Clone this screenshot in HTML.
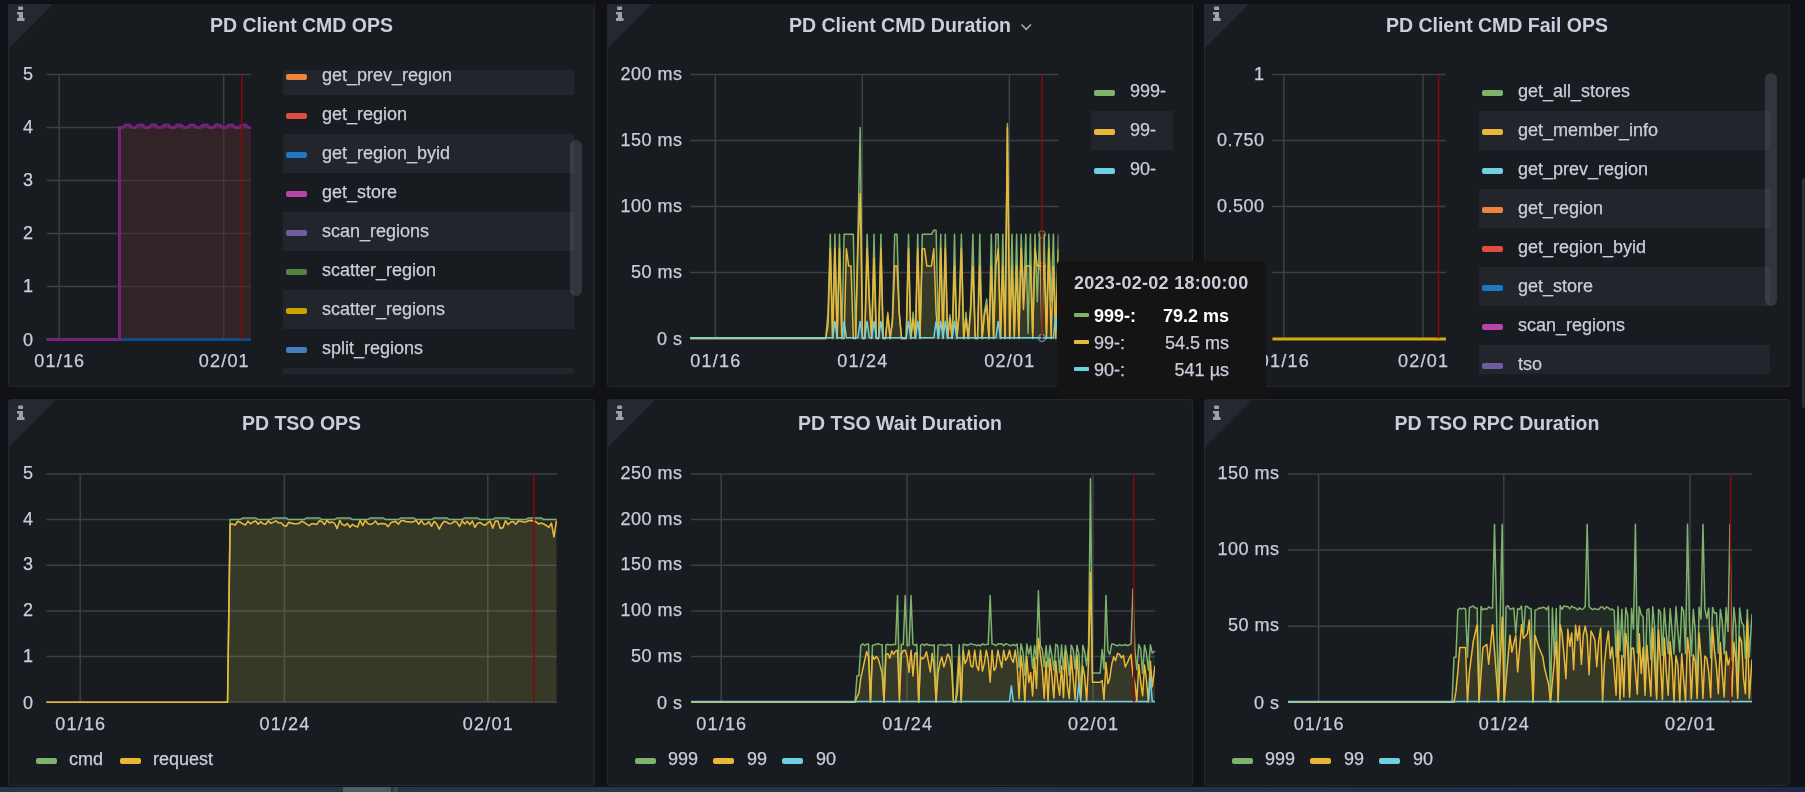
<!DOCTYPE html>
<html><head><meta charset="utf-8"><style>
html,body{margin:0;padding:0;width:1805px;height:792px;overflow:hidden;background:#111217;font-family:"Liberation Sans", sans-serif;}
.panel{position:absolute;box-sizing:border-box;background:#181b1f;border:1px solid #25272c;border-radius:3px;}
.t{position:absolute;white-space:nowrap;line-height:18px;}
.layer{position:absolute;left:0;top:0;width:1805px;height:792px;will-change:transform;-webkit-text-stroke:0.25px currentColor;}
svg{position:absolute;left:0;top:0;}
.leg{position:absolute;overflow:hidden;}
.lr{position:absolute;left:0;right:0;height:39px;color:#ccccdc;font-size:18px;line-height:39px;}
.lr i{position:absolute;left:3px;top:18px;width:21px;height:6px;border-radius:2px;}
.lr span{position:absolute;left:39px;top:0px;white-space:nowrap;}
.sb{position:absolute;width:12px;background:rgba(120,124,135,0.28);border-radius:6px;}
.tip{position:absolute;background:#141414;border-radius:4px;color:#ccccdc;}
.tr{position:absolute;left:17px;height:27px;width:190px;font-size:18px;line-height:27px;}
.tr i{position:absolute;left:0;top:10px;width:15px;height:4px;border-radius:1px;}
.tr .k{position:absolute;left:20px;}
.tr .v{position:absolute;right:35px;}
.bot{position:absolute;left:0;top:787px;width:1805px;height:5px;background:linear-gradient(90deg,#1e3a44 0%,#223a47 50%,#1d2a47 100%);}
</style></head><body>
<div class="panel" style="left:8px;top:4px;width:587px;height:383px;border-top:none;border-top-left-radius:0;border-top-right-radius:0;"></div><div class="panel" style="left:607px;top:4px;width:586px;height:383px;border-top:none;border-top-left-radius:0;border-top-right-radius:0;"></div><div class="panel" style="left:1204px;top:4px;width:586px;height:383px;border-top:none;border-top-left-radius:0;border-top-right-radius:0;"></div><div class="panel" style="left:8px;top:399px;width:587px;height:387px;"></div><div class="panel" style="left:607px;top:399px;width:586px;height:387px;"></div><div class="panel" style="left:1204px;top:399px;width:586px;height:387px;"></div>
<svg width="1805" height="792" viewBox="0 0 1805 792"><path d="M9 4H53L9 48Z" fill="#252830"/><g fill="#9ea0ac"><rect x="18.1" y="6.6" width="5" height="3.4" rx="0.8"/><path d="M17 12H23V18H24.5V21H17V18H18.8V14.5H17Z"/></g><path d="M608 4H652L608 48Z" fill="#252830"/><g fill="#9ea0ac"><rect x="617.1" y="6.6" width="5" height="3.4" rx="0.8"/><path d="M616 12H622V18H623.5V21H616V18H617.8V14.5H616Z"/></g><path d="M1205 4H1249L1205 48Z" fill="#252830"/><g fill="#9ea0ac"><rect x="1214.1" y="6.6" width="5" height="3.4" rx="0.8"/><path d="M1213 12H1219V18H1220.5V21H1213V18H1214.8V14.5H1213Z"/></g><path d="M9 400H56L9 447Z" fill="#252830"/><g fill="#9ea0ac"><rect x="18.1" y="405.6" width="5" height="3.4" rx="0.8"/><path d="M17 411H23V417H24.5V420H17V417H18.8V413.5H17Z"/></g><path d="M608 400H655L608 447Z" fill="#252830"/><g fill="#9ea0ac"><rect x="617.1" y="405.6" width="5" height="3.4" rx="0.8"/><path d="M616 411H622V417H623.5V420H616V417H617.8V413.5H616Z"/></g><path d="M1205 400H1252L1205 447Z" fill="#252830"/><g fill="#9ea0ac"><rect x="1214.1" y="405.6" width="5" height="3.4" rx="0.8"/><path d="M1213 411H1219V417H1220.5V420H1213V417H1214.8V413.5H1213Z"/></g><path d="M1021.5 24.5L1026.2 29.3L1031 24.5" fill="none" stroke="#a5a7b1" stroke-width="1.6"/><line x1="46.5" y1="74.6" x2="251" y2="74.6" stroke="#3d3f44" stroke-width="1.5"/><line x1="46.5" y1="127.6" x2="251" y2="127.6" stroke="#3d3f44" stroke-width="1.5"/><line x1="46.5" y1="180.6" x2="251" y2="180.6" stroke="#3d3f44" stroke-width="1.5"/><line x1="46.5" y1="233.6" x2="251" y2="233.6" stroke="#3d3f44" stroke-width="1.5"/><line x1="46.5" y1="286.6" x2="251" y2="286.6" stroke="#3d3f44" stroke-width="1.5"/><line x1="46.5" y1="339.6" x2="251" y2="339.6" stroke="#3d3f44" stroke-width="1.5"/><line x1="59.2" y1="74.6" x2="59.2" y2="339.6" stroke="#3d3f44" stroke-width="1.5"/><line x1="223.7" y1="74.6" x2="223.7" y2="339.6" stroke="#3d3f44" stroke-width="1.5"/><line x1="690" y1="74.6" x2="1058.5" y2="74.6" stroke="#3d3f44" stroke-width="1.5"/><line x1="690" y1="140.6" x2="1058.5" y2="140.6" stroke="#3d3f44" stroke-width="1.5"/><line x1="690" y1="206.6" x2="1058.5" y2="206.6" stroke="#3d3f44" stroke-width="1.5"/><line x1="690" y1="272.6" x2="1058.5" y2="272.6" stroke="#3d3f44" stroke-width="1.5"/><line x1="690" y1="338.6" x2="1058.5" y2="338.6" stroke="#3d3f44" stroke-width="1.5"/><line x1="715.3" y1="74.5" x2="715.3" y2="338.6" stroke="#3d3f44" stroke-width="1.5"/><line x1="862.3" y1="74.5" x2="862.3" y2="338.6" stroke="#3d3f44" stroke-width="1.5"/><line x1="1009.3" y1="74.5" x2="1009.3" y2="338.6" stroke="#3d3f44" stroke-width="1.5"/><line x1="1272.5" y1="74.6" x2="1446" y2="74.6" stroke="#3d3f44" stroke-width="1.5"/><line x1="1272.5" y1="140.6" x2="1446" y2="140.6" stroke="#3d3f44" stroke-width="1.5"/><line x1="1272.5" y1="206.6" x2="1446" y2="206.6" stroke="#3d3f44" stroke-width="1.5"/><line x1="1272.5" y1="272.6" x2="1446" y2="272.6" stroke="#3d3f44" stroke-width="1.5"/><line x1="1272.5" y1="338.6" x2="1446" y2="338.6" stroke="#3d3f44" stroke-width="1.5"/><line x1="1283.8" y1="74.5" x2="1283.8" y2="338.6" stroke="#3d3f44" stroke-width="1.5"/><line x1="1423" y1="74.5" x2="1423" y2="338.6" stroke="#3d3f44" stroke-width="1.5"/><line x1="46.5" y1="473.9" x2="557" y2="473.9" stroke="#3d3f44" stroke-width="1.5"/><line x1="46.5" y1="519.5799999999999" x2="557" y2="519.5799999999999" stroke="#3d3f44" stroke-width="1.5"/><line x1="46.5" y1="565.26" x2="557" y2="565.26" stroke="#3d3f44" stroke-width="1.5"/><line x1="46.5" y1="610.9399999999999" x2="557" y2="610.9399999999999" stroke="#3d3f44" stroke-width="1.5"/><line x1="46.5" y1="656.62" x2="557" y2="656.62" stroke="#3d3f44" stroke-width="1.5"/><line x1="46.5" y1="702.3" x2="557" y2="702.3" stroke="#3d3f44" stroke-width="1.5"/><line x1="80.2" y1="474.5" x2="80.2" y2="702.3" stroke="#3d3f44" stroke-width="1.5"/><line x1="284.4" y1="474.5" x2="284.4" y2="702.3" stroke="#3d3f44" stroke-width="1.5"/><line x1="487.8" y1="474.5" x2="487.8" y2="702.3" stroke="#3d3f44" stroke-width="1.5"/><line x1="691" y1="473.9" x2="1155" y2="473.9" stroke="#3d3f44" stroke-width="1.5"/><line x1="691" y1="519.5799999999999" x2="1155" y2="519.5799999999999" stroke="#3d3f44" stroke-width="1.5"/><line x1="691" y1="565.26" x2="1155" y2="565.26" stroke="#3d3f44" stroke-width="1.5"/><line x1="691" y1="610.9399999999999" x2="1155" y2="610.9399999999999" stroke="#3d3f44" stroke-width="1.5"/><line x1="691" y1="656.62" x2="1155" y2="656.62" stroke="#3d3f44" stroke-width="1.5"/><line x1="691" y1="702.3" x2="1155" y2="702.3" stroke="#3d3f44" stroke-width="1.5"/><line x1="721.2" y1="474.5" x2="721.2" y2="702.3" stroke="#3d3f44" stroke-width="1.5"/><line x1="907.1" y1="474.5" x2="907.1" y2="702.3" stroke="#3d3f44" stroke-width="1.5"/><line x1="1093" y1="474.5" x2="1093" y2="702.3" stroke="#3d3f44" stroke-width="1.5"/><line x1="1288" y1="473.9" x2="1752" y2="473.9" stroke="#3d3f44" stroke-width="1.5"/><line x1="1288" y1="550.03" x2="1752" y2="550.03" stroke="#3d3f44" stroke-width="1.5"/><line x1="1288" y1="626.16" x2="1752" y2="626.16" stroke="#3d3f44" stroke-width="1.5"/><line x1="1288" y1="702.29" x2="1752" y2="702.29" stroke="#3d3f44" stroke-width="1.5"/><line x1="1318.6" y1="474.5" x2="1318.6" y2="702.29" stroke="#3d3f44" stroke-width="1.5"/><line x1="1503.8" y1="474.5" x2="1503.8" y2="702.29" stroke="#3d3f44" stroke-width="1.5"/><line x1="1690" y1="474.5" x2="1690" y2="702.29" stroke="#3d3f44" stroke-width="1.5"/><rect x="36" y="758.0" width="21" height="6" rx="2" fill="#7EB26D"/><rect x="120" y="758.0" width="21" height="6" rx="2" fill="#EAB839"/><rect x="635" y="758.0" width="21" height="6" rx="2" fill="#7EB26D"/><rect x="713" y="758.0" width="21" height="6" rx="2" fill="#EAB839"/><rect x="782" y="758.0" width="21" height="6" rx="2" fill="#6ED0E0"/><rect x="1232" y="758.0" width="21" height="6" rx="2" fill="#7EB26D"/><rect x="1310" y="758.0" width="21" height="6" rx="2" fill="#EAB839"/><rect x="1379" y="758.0" width="21" height="6" rx="2" fill="#6ED0E0"/><clipPath id="c1"><rect x="46" y="60" width="205" height="285"/></clipPath><g clip-path="url(#c1)"><path d="M119.50 339.60 L119.50 127.60 L123.00 127.60 L123.00 127.60 L125.50 125.00 L129.50 125.00 L132.00 127.60 L135.90 127.60 L135.90 127.60 L138.40 125.00 L142.40 125.00 L144.90 127.60 L148.80 127.60 L148.80 127.60 L151.30 125.00 L155.30 125.00 L157.80 127.60 L161.70 127.60 L161.70 127.60 L164.20 125.00 L168.20 125.00 L170.70 127.60 L174.60 127.60 L174.60 127.60 L177.10 125.00 L181.10 125.00 L183.60 127.60 L187.50 127.60 L187.50 127.60 L190.00 125.00 L194.00 125.00 L196.50 127.60 L200.40 127.60 L200.40 127.60 L202.90 125.00 L206.90 125.00 L209.40 127.60 L213.30 127.60 L213.30 127.60 L215.80 125.00 L219.80 125.00 L222.30 127.60 L226.20 127.60 L226.20 127.60 L228.70 125.00 L232.70 125.00 L235.20 127.60 L239.10 127.60 L239.10 127.60 L241.60 125.00 L245.60 125.00 L248.10 127.60 L252.00 127.60 L252.00 127.60 L254.50 125.00 L258.50 125.00 L261.00 127.60 L264.90 127.60 L251.00 339.60Z" fill="rgb(76,43,45)" fill-opacity="0.5"/><path d="M120.00 339.60 L251.00 339.60" stroke="#124a85" stroke-width="3" fill="none"/><path d="M46.50 339.60 L119.50 339.60 L119.50 127.60 L123.00 127.60 L123.00 127.60 L125.50 125.00 L129.50 125.00 L132.00 127.60 L135.90 127.60 L135.90 127.60 L138.40 125.00 L142.40 125.00 L144.90 127.60 L148.80 127.60 L148.80 127.60 L151.30 125.00 L155.30 125.00 L157.80 127.60 L161.70 127.60 L161.70 127.60 L164.20 125.00 L168.20 125.00 L170.70 127.60 L174.60 127.60 L174.60 127.60 L177.10 125.00 L181.10 125.00 L183.60 127.60 L187.50 127.60 L187.50 127.60 L190.00 125.00 L194.00 125.00 L196.50 127.60 L200.40 127.60 L200.40 127.60 L202.90 125.00 L206.90 125.00 L209.40 127.60 L213.30 127.60 L213.30 127.60 L215.80 125.00 L219.80 125.00 L222.30 127.60 L226.20 127.60 L226.20 127.60 L228.70 125.00 L232.70 125.00 L235.20 127.60 L239.10 127.60 L239.10 127.60 L241.60 125.00 L245.60 125.00 L248.10 127.60 L252.00 127.60 L252.00 127.60 L254.50 125.00 L258.50 125.00 L261.00 127.60 L264.90 127.60" fill="none" stroke="#75237a" stroke-width="3" stroke-linejoin="miter"/></g><path d="M1272.5 339 L1446 339" stroke="#d6a70e" stroke-width="3"/><clipPath id="c4"><rect x="46" y="460" width="511" height="250"/></clipPath><g clip-path="url(#c4)"><path d="M46.50 702.30 L46.50 702.30 L49.05 702.30 L51.60 702.30 L54.15 702.30 L56.70 702.30 L59.25 702.30 L61.80 702.30 L64.35 702.30 L66.90 702.30 L69.45 702.30 L72.00 702.30 L74.55 702.30 L77.10 702.30 L79.65 702.30 L82.20 702.30 L84.75 702.30 L87.30 702.30 L89.85 702.30 L92.40 702.30 L94.95 702.30 L97.50 702.30 L100.05 702.30 L102.60 702.30 L105.15 702.30 L107.70 702.30 L110.25 702.30 L112.80 702.30 L115.35 702.30 L117.90 702.30 L120.45 702.30 L123.00 702.30 L125.55 702.30 L128.10 702.30 L130.65 702.30 L133.20 702.30 L135.75 702.30 L138.30 702.30 L140.85 702.30 L143.40 702.30 L145.95 702.30 L148.50 702.30 L151.05 702.30 L153.60 702.30 L156.15 702.30 L158.70 702.30 L161.25 702.30 L163.80 702.30 L166.35 702.30 L168.90 702.30 L171.45 702.30 L174.00 702.30 L176.55 702.30 L179.10 702.30 L181.65 702.30 L184.20 702.30 L186.75 702.30 L189.30 702.30 L191.85 702.30 L194.40 702.30 L196.95 702.30 L199.50 702.30 L202.05 702.30 L204.60 702.30 L207.15 702.30 L209.70 702.30 L212.25 702.30 L214.80 702.30 L217.35 702.30 L219.90 702.30 L222.45 702.30 L225.00 702.30 L227.55 702.30 L230.10 519.58 L232.65 519.58 L235.20 519.58 L237.75 519.58 L240.30 519.58 L242.85 517.98 L245.40 517.98 L247.95 517.98 L250.50 517.98 L253.05 517.98 L255.60 517.98 L258.15 519.58 L260.70 519.58 L263.25 519.58 L265.80 519.58 L268.35 519.58 L270.90 519.58 L273.45 517.98 L276.00 517.98 L278.55 517.98 L281.10 517.98 L283.65 517.98 L286.20 517.98 L288.75 519.58 L291.30 519.58 L293.85 519.58 L296.40 519.58 L298.95 519.58 L301.50 519.58 L304.05 519.58 L306.60 517.98 L309.15 517.98 L311.70 517.98 L314.25 517.98 L316.80 517.98 L319.35 517.98 L321.90 519.58 L324.45 519.58 L327.00 519.58 L329.55 519.58 L332.10 519.58 L334.65 519.58 L337.20 517.98 L339.75 517.98 L342.30 517.98 L344.85 517.98 L347.40 517.98 L349.95 517.98 L352.50 519.58 L355.05 519.58 L357.60 519.58 L360.15 519.58 L362.70 519.58 L365.25 519.58 L367.80 519.58 L370.35 517.98 L372.90 517.98 L375.45 517.98 L378.00 517.98 L380.55 517.98 L383.10 517.98 L385.65 519.58 L388.20 519.58 L390.75 519.58 L393.30 519.58 L395.85 519.58 L398.40 519.58 L400.95 517.98 L403.50 517.98 L406.05 517.98 L408.60 517.98 L411.15 517.98 L413.70 517.98 L416.25 519.58 L418.80 519.58 L421.35 519.58 L423.90 519.58 L426.45 519.58 L429.00 519.58 L431.55 519.58 L434.10 517.98 L436.65 517.98 L439.20 517.98 L441.75 517.98 L444.30 517.98 L446.85 517.98 L449.40 519.58 L451.95 519.58 L454.50 519.58 L457.05 519.58 L459.60 519.58 L462.15 519.58 L464.70 517.98 L467.25 517.98 L469.80 517.98 L472.35 517.98 L474.90 517.98 L477.45 517.98 L480.00 519.58 L482.55 519.58 L485.10 519.58 L487.65 519.58 L490.20 519.58 L492.75 519.58 L495.30 517.98 L497.85 517.98 L500.40 517.98 L502.95 517.98 L505.50 517.98 L508.05 517.98 L510.60 519.58 L513.15 519.58 L515.70 519.58 L518.25 519.58 L520.80 519.58 L523.35 519.58 L525.90 519.58 L528.45 517.98 L531.00 517.98 L533.55 517.98 L536.10 517.98 L538.65 517.98 L541.20 517.98 L543.75 519.58 L546.30 519.58 L548.85 519.58 L551.40 519.58 L553.95 519.58 L556.50 519.58 L556.50 702.30Z" fill="#7EB26D" fill-opacity="0.1" stroke="none"/><path d="M46.50 702.30 L49.05 702.30 L51.60 702.30 L54.15 702.30 L56.70 702.30 L59.25 702.30 L61.80 702.30 L64.35 702.30 L66.90 702.30 L69.45 702.30 L72.00 702.30 L74.55 702.30 L77.10 702.30 L79.65 702.30 L82.20 702.30 L84.75 702.30 L87.30 702.30 L89.85 702.30 L92.40 702.30 L94.95 702.30 L97.50 702.30 L100.05 702.30 L102.60 702.30 L105.15 702.30 L107.70 702.30 L110.25 702.30 L112.80 702.30 L115.35 702.30 L117.90 702.30 L120.45 702.30 L123.00 702.30 L125.55 702.30 L128.10 702.30 L130.65 702.30 L133.20 702.30 L135.75 702.30 L138.30 702.30 L140.85 702.30 L143.40 702.30 L145.95 702.30 L148.50 702.30 L151.05 702.30 L153.60 702.30 L156.15 702.30 L158.70 702.30 L161.25 702.30 L163.80 702.30 L166.35 702.30 L168.90 702.30 L171.45 702.30 L174.00 702.30 L176.55 702.30 L179.10 702.30 L181.65 702.30 L184.20 702.30 L186.75 702.30 L189.30 702.30 L191.85 702.30 L194.40 702.30 L196.95 702.30 L199.50 702.30 L202.05 702.30 L204.60 702.30 L207.15 702.30 L209.70 702.30 L212.25 702.30 L214.80 702.30 L217.35 702.30 L219.90 702.30 L222.45 702.30 L225.00 702.30 L227.55 702.30 L230.10 519.58 L232.65 519.58 L235.20 519.58 L237.75 519.58 L240.30 519.58 L242.85 517.98 L245.40 517.98 L247.95 517.98 L250.50 517.98 L253.05 517.98 L255.60 517.98 L258.15 519.58 L260.70 519.58 L263.25 519.58 L265.80 519.58 L268.35 519.58 L270.90 519.58 L273.45 517.98 L276.00 517.98 L278.55 517.98 L281.10 517.98 L283.65 517.98 L286.20 517.98 L288.75 519.58 L291.30 519.58 L293.85 519.58 L296.40 519.58 L298.95 519.58 L301.50 519.58 L304.05 519.58 L306.60 517.98 L309.15 517.98 L311.70 517.98 L314.25 517.98 L316.80 517.98 L319.35 517.98 L321.90 519.58 L324.45 519.58 L327.00 519.58 L329.55 519.58 L332.10 519.58 L334.65 519.58 L337.20 517.98 L339.75 517.98 L342.30 517.98 L344.85 517.98 L347.40 517.98 L349.95 517.98 L352.50 519.58 L355.05 519.58 L357.60 519.58 L360.15 519.58 L362.70 519.58 L365.25 519.58 L367.80 519.58 L370.35 517.98 L372.90 517.98 L375.45 517.98 L378.00 517.98 L380.55 517.98 L383.10 517.98 L385.65 519.58 L388.20 519.58 L390.75 519.58 L393.30 519.58 L395.85 519.58 L398.40 519.58 L400.95 517.98 L403.50 517.98 L406.05 517.98 L408.60 517.98 L411.15 517.98 L413.70 517.98 L416.25 519.58 L418.80 519.58 L421.35 519.58 L423.90 519.58 L426.45 519.58 L429.00 519.58 L431.55 519.58 L434.10 517.98 L436.65 517.98 L439.20 517.98 L441.75 517.98 L444.30 517.98 L446.85 517.98 L449.40 519.58 L451.95 519.58 L454.50 519.58 L457.05 519.58 L459.60 519.58 L462.15 519.58 L464.70 517.98 L467.25 517.98 L469.80 517.98 L472.35 517.98 L474.90 517.98 L477.45 517.98 L480.00 519.58 L482.55 519.58 L485.10 519.58 L487.65 519.58 L490.20 519.58 L492.75 519.58 L495.30 517.98 L497.85 517.98 L500.40 517.98 L502.95 517.98 L505.50 517.98 L508.05 517.98 L510.60 519.58 L513.15 519.58 L515.70 519.58 L518.25 519.58 L520.80 519.58 L523.35 519.58 L525.90 519.58 L528.45 517.98 L531.00 517.98 L533.55 517.98 L536.10 517.98 L538.65 517.98 L541.20 517.98 L543.75 519.58 L546.30 519.58 L548.85 519.58 L551.40 519.58 L553.95 519.58 L556.50 519.58" fill="none" stroke="#7EB26D" stroke-width="1.5" stroke-linejoin="round"/><path d="M46.50 702.30 L46.50 702.30 L49.05 702.30 L51.60 702.30 L54.15 702.30 L56.70 702.30 L59.25 702.30 L61.80 702.30 L64.35 702.30 L66.90 702.30 L69.45 702.30 L72.00 702.30 L74.55 702.30 L77.10 702.30 L79.65 702.30 L82.20 702.30 L84.75 702.30 L87.30 702.30 L89.85 702.30 L92.40 702.30 L94.95 702.30 L97.50 702.30 L100.05 702.30 L102.60 702.30 L105.15 702.30 L107.70 702.30 L110.25 702.30 L112.80 702.30 L115.35 702.30 L117.90 702.30 L120.45 702.30 L123.00 702.30 L125.55 702.30 L128.10 702.30 L130.65 702.30 L133.20 702.30 L135.75 702.30 L138.30 702.30 L140.85 702.30 L143.40 702.30 L145.95 702.30 L148.50 702.30 L151.05 702.30 L153.60 702.30 L156.15 702.30 L158.70 702.30 L161.25 702.30 L163.80 702.30 L166.35 702.30 L168.90 702.30 L171.45 702.30 L174.00 702.30 L176.55 702.30 L179.10 702.30 L181.65 702.30 L184.20 702.30 L186.75 702.30 L189.30 702.30 L191.85 702.30 L194.40 702.30 L196.95 702.30 L199.50 702.30 L202.05 702.30 L204.60 702.30 L207.15 702.30 L209.70 702.30 L212.25 702.30 L214.80 702.30 L217.35 702.30 L219.90 702.30 L222.45 702.30 L225.00 702.30 L227.55 702.30 L230.10 524.16 L232.65 523.93 L235.20 524.98 L237.75 521.28 L240.30 522.28 L242.85 523.86 L245.40 524.94 L247.95 521.10 L250.50 523.77 L253.05 521.88 L255.60 520.90 L258.15 524.23 L260.70 521.69 L263.25 523.83 L265.80 524.22 L268.35 520.85 L270.90 523.30 L273.45 522.12 L276.00 520.92 L278.55 522.81 L281.10 522.73 L283.65 525.46 L286.20 526.31 L288.75 522.28 L291.30 523.12 L293.85 523.76 L296.40 523.73 L298.95 523.41 L301.50 521.36 L304.05 522.18 L306.60 524.17 L309.15 525.68 L311.70 523.57 L314.25 523.83 L316.80 524.42 L319.35 520.72 L321.90 521.42 L324.45 524.53 L327.00 520.41 L329.55 522.82 L332.10 521.91 L334.65 523.33 L337.20 528.55 L339.75 520.43 L342.30 524.56 L344.85 525.59 L347.40 523.34 L349.95 527.24 L352.50 524.35 L355.05 526.08 L357.60 526.93 L360.15 520.28 L362.70 525.64 L365.25 520.32 L367.80 523.56 L370.35 524.44 L372.90 523.53 L375.45 521.00 L378.00 524.47 L380.55 523.55 L383.10 523.60 L385.65 523.99 L388.20 526.59 L390.75 522.86 L393.30 521.77 L395.85 521.37 L398.40 524.20 L400.95 520.81 L403.50 520.59 L406.05 521.75 L408.60 521.82 L411.15 522.31 L413.70 521.63 L416.25 520.60 L418.80 524.28 L421.35 520.43 L423.90 524.41 L426.45 524.05 L429.00 521.71 L431.55 526.27 L434.10 521.37 L436.65 523.66 L439.20 529.11 L441.75 524.10 L444.30 521.21 L446.85 522.22 L449.40 523.73 L451.95 523.17 L454.50 521.25 L457.05 522.32 L459.60 526.46 L462.15 520.85 L464.70 524.00 L467.25 521.27 L469.80 524.56 L472.35 521.01 L474.90 527.43 L477.45 523.25 L480.00 522.49 L482.55 524.19 L485.10 525.13 L487.65 522.72 L490.20 521.23 L492.75 528.28 L495.30 520.97 L497.85 521.14 L500.40 528.37 L502.95 527.63 L505.50 520.68 L508.05 524.58 L510.60 522.24 L513.15 521.50 L515.70 524.28 L518.25 520.93 L520.80 521.28 L523.35 521.89 L525.90 521.96 L528.45 520.64 L531.00 520.65 L533.55 520.84 L536.10 521.94 L538.65 523.99 L541.20 523.03 L543.75 524.03 L546.30 525.48 L548.85 527.47 L551.40 523.08 L553.95 536.94 L556.50 520.54 L556.50 702.30Z" fill="#EAB839" fill-opacity="0.1" stroke="none"/><path d="M46.50 702.30 L49.05 702.30 L51.60 702.30 L54.15 702.30 L56.70 702.30 L59.25 702.30 L61.80 702.30 L64.35 702.30 L66.90 702.30 L69.45 702.30 L72.00 702.30 L74.55 702.30 L77.10 702.30 L79.65 702.30 L82.20 702.30 L84.75 702.30 L87.30 702.30 L89.85 702.30 L92.40 702.30 L94.95 702.30 L97.50 702.30 L100.05 702.30 L102.60 702.30 L105.15 702.30 L107.70 702.30 L110.25 702.30 L112.80 702.30 L115.35 702.30 L117.90 702.30 L120.45 702.30 L123.00 702.30 L125.55 702.30 L128.10 702.30 L130.65 702.30 L133.20 702.30 L135.75 702.30 L138.30 702.30 L140.85 702.30 L143.40 702.30 L145.95 702.30 L148.50 702.30 L151.05 702.30 L153.60 702.30 L156.15 702.30 L158.70 702.30 L161.25 702.30 L163.80 702.30 L166.35 702.30 L168.90 702.30 L171.45 702.30 L174.00 702.30 L176.55 702.30 L179.10 702.30 L181.65 702.30 L184.20 702.30 L186.75 702.30 L189.30 702.30 L191.85 702.30 L194.40 702.30 L196.95 702.30 L199.50 702.30 L202.05 702.30 L204.60 702.30 L207.15 702.30 L209.70 702.30 L212.25 702.30 L214.80 702.30 L217.35 702.30 L219.90 702.30 L222.45 702.30 L225.00 702.30 L227.55 702.30 L230.10 524.16 L232.65 523.93 L235.20 524.98 L237.75 521.28 L240.30 522.28 L242.85 523.86 L245.40 524.94 L247.95 521.10 L250.50 523.77 L253.05 521.88 L255.60 520.90 L258.15 524.23 L260.70 521.69 L263.25 523.83 L265.80 524.22 L268.35 520.85 L270.90 523.30 L273.45 522.12 L276.00 520.92 L278.55 522.81 L281.10 522.73 L283.65 525.46 L286.20 526.31 L288.75 522.28 L291.30 523.12 L293.85 523.76 L296.40 523.73 L298.95 523.41 L301.50 521.36 L304.05 522.18 L306.60 524.17 L309.15 525.68 L311.70 523.57 L314.25 523.83 L316.80 524.42 L319.35 520.72 L321.90 521.42 L324.45 524.53 L327.00 520.41 L329.55 522.82 L332.10 521.91 L334.65 523.33 L337.20 528.55 L339.75 520.43 L342.30 524.56 L344.85 525.59 L347.40 523.34 L349.95 527.24 L352.50 524.35 L355.05 526.08 L357.60 526.93 L360.15 520.28 L362.70 525.64 L365.25 520.32 L367.80 523.56 L370.35 524.44 L372.90 523.53 L375.45 521.00 L378.00 524.47 L380.55 523.55 L383.10 523.60 L385.65 523.99 L388.20 526.59 L390.75 522.86 L393.30 521.77 L395.85 521.37 L398.40 524.20 L400.95 520.81 L403.50 520.59 L406.05 521.75 L408.60 521.82 L411.15 522.31 L413.70 521.63 L416.25 520.60 L418.80 524.28 L421.35 520.43 L423.90 524.41 L426.45 524.05 L429.00 521.71 L431.55 526.27 L434.10 521.37 L436.65 523.66 L439.20 529.11 L441.75 524.10 L444.30 521.21 L446.85 522.22 L449.40 523.73 L451.95 523.17 L454.50 521.25 L457.05 522.32 L459.60 526.46 L462.15 520.85 L464.70 524.00 L467.25 521.27 L469.80 524.56 L472.35 521.01 L474.90 527.43 L477.45 523.25 L480.00 522.49 L482.55 524.19 L485.10 525.13 L487.65 522.72 L490.20 521.23 L492.75 528.28 L495.30 520.97 L497.85 521.14 L500.40 528.37 L502.95 527.63 L505.50 520.68 L508.05 524.58 L510.60 522.24 L513.15 521.50 L515.70 524.28 L518.25 520.93 L520.80 521.28 L523.35 521.89 L525.90 521.96 L528.45 520.64 L531.00 520.65 L533.55 520.84 L536.10 521.94 L538.65 523.99 L541.20 523.03 L543.75 524.03 L546.30 525.48 L548.85 527.47 L551.40 523.08 L553.95 536.94 L556.50 520.54" fill="none" stroke="#EAB839" stroke-width="1.6" stroke-linejoin="round"/></g><clipPath id="c2"><rect x="690" y="60" width="368.5" height="285"/></clipPath><g clip-path="url(#c2)"><path d="M690.00 338.60 L690.00 338.60 L692.30 338.60 L694.60 338.60 L696.90 338.60 L699.20 338.60 L701.50 338.60 L703.80 338.60 L706.10 338.60 L708.40 338.60 L710.70 338.60 L713.00 338.60 L715.30 338.60 L717.60 338.60 L719.90 338.60 L722.20 338.60 L724.50 338.60 L726.80 338.60 L729.10 338.60 L731.40 338.60 L733.70 338.60 L736.00 338.60 L738.30 338.60 L740.60 338.60 L742.90 338.60 L745.20 338.60 L747.50 338.60 L749.80 338.60 L752.10 338.60 L754.40 338.60 L756.70 338.60 L759.00 338.60 L761.30 338.60 L763.60 338.60 L765.90 338.60 L768.20 338.60 L770.50 338.60 L772.80 338.60 L775.10 338.60 L777.40 338.60 L779.70 338.60 L782.00 338.60 L784.30 338.60 L786.60 338.60 L788.90 338.60 L791.20 338.60 L793.50 338.60 L795.80 338.60 L798.10 338.60 L800.40 338.60 L802.70 338.60 L805.00 338.60 L807.30 338.60 L809.60 338.60 L811.90 338.60 L814.20 338.60 L816.50 338.60 L818.80 338.60 L821.10 338.60 L823.40 338.60 L825.70 338.60 L828.00 312.20 L830.30 234.32 L832.60 338.60 L834.90 234.32 L837.20 338.60 L839.50 234.32 L841.80 338.60 L844.10 234.32 L846.40 234.32 L848.70 234.32 L851.00 234.32 L853.30 234.32 L855.60 338.60 L857.90 234.32 L860.20 127.40 L862.50 338.60 L864.80 338.60 L867.10 234.32 L869.40 299.00 L871.70 338.60 L874.00 234.32 L876.30 338.60 L878.60 338.60 L880.90 234.32 L883.20 338.60 L885.50 338.60 L887.80 312.20 L890.10 338.60 L892.40 318.80 L894.70 234.32 L897.00 234.32 L899.30 312.20 L901.60 338.60 L903.90 338.60 L906.20 338.60 L908.50 234.32 L910.80 338.60 L913.10 312.20 L915.40 338.60 L917.70 234.32 L920.00 338.60 L922.30 234.32 L924.60 234.32 L926.90 234.32 L929.20 234.32 L931.50 234.32 L933.80 230.36 L936.10 230.36 L938.40 338.60 L940.70 234.32 L943.00 338.60 L945.30 234.32 L947.60 338.60 L949.90 314.84 L952.20 338.60 L954.50 234.32 L956.80 338.60 L959.10 312.20 L961.40 234.32 L963.70 338.60 L966.00 312.20 L968.30 338.60 L970.60 305.60 L972.90 234.32 L975.20 338.60 L977.50 338.60 L979.80 234.32 L982.10 338.60 L984.40 312.20 L986.70 299.00 L989.00 338.60 L991.30 234.32 L993.60 338.60 L995.90 234.32 L998.20 234.32 L1000.50 338.60 L1002.80 234.32 L1005.10 338.60 L1007.40 123.44 L1009.70 338.60 L1012.00 234.32 L1014.30 333.32 L1016.60 234.32 L1018.90 333.32 L1021.20 234.32 L1023.50 301.64 L1025.80 234.32 L1028.10 333.32 L1030.40 234.32 L1032.70 333.32 L1035.00 234.32 L1037.30 301.64 L1039.60 234.32 L1041.90 333.32 L1044.20 234.32 L1046.50 333.32 L1048.80 234.32 L1051.10 301.64 L1053.40 234.32 L1055.70 333.32 L1058.50 234.32 L1058.50 338.60Z" fill="#7EB26D" fill-opacity="0.1" stroke="none"/><path d="M690.00 338.60 L692.30 338.60 L694.60 338.60 L696.90 338.60 L699.20 338.60 L701.50 338.60 L703.80 338.60 L706.10 338.60 L708.40 338.60 L710.70 338.60 L713.00 338.60 L715.30 338.60 L717.60 338.60 L719.90 338.60 L722.20 338.60 L724.50 338.60 L726.80 338.60 L729.10 338.60 L731.40 338.60 L733.70 338.60 L736.00 338.60 L738.30 338.60 L740.60 338.60 L742.90 338.60 L745.20 338.60 L747.50 338.60 L749.80 338.60 L752.10 338.60 L754.40 338.60 L756.70 338.60 L759.00 338.60 L761.30 338.60 L763.60 338.60 L765.90 338.60 L768.20 338.60 L770.50 338.60 L772.80 338.60 L775.10 338.60 L777.40 338.60 L779.70 338.60 L782.00 338.60 L784.30 338.60 L786.60 338.60 L788.90 338.60 L791.20 338.60 L793.50 338.60 L795.80 338.60 L798.10 338.60 L800.40 338.60 L802.70 338.60 L805.00 338.60 L807.30 338.60 L809.60 338.60 L811.90 338.60 L814.20 338.60 L816.50 338.60 L818.80 338.60 L821.10 338.60 L823.40 338.60 L825.70 338.60 L828.00 312.20 L830.30 234.32 L832.60 338.60 L834.90 234.32 L837.20 338.60 L839.50 234.32 L841.80 338.60 L844.10 234.32 L846.40 234.32 L848.70 234.32 L851.00 234.32 L853.30 234.32 L855.60 338.60 L857.90 234.32 L860.20 127.40 L862.50 338.60 L864.80 338.60 L867.10 234.32 L869.40 299.00 L871.70 338.60 L874.00 234.32 L876.30 338.60 L878.60 338.60 L880.90 234.32 L883.20 338.60 L885.50 338.60 L887.80 312.20 L890.10 338.60 L892.40 318.80 L894.70 234.32 L897.00 234.32 L899.30 312.20 L901.60 338.60 L903.90 338.60 L906.20 338.60 L908.50 234.32 L910.80 338.60 L913.10 312.20 L915.40 338.60 L917.70 234.32 L920.00 338.60 L922.30 234.32 L924.60 234.32 L926.90 234.32 L929.20 234.32 L931.50 234.32 L933.80 230.36 L936.10 230.36 L938.40 338.60 L940.70 234.32 L943.00 338.60 L945.30 234.32 L947.60 338.60 L949.90 314.84 L952.20 338.60 L954.50 234.32 L956.80 338.60 L959.10 312.20 L961.40 234.32 L963.70 338.60 L966.00 312.20 L968.30 338.60 L970.60 305.60 L972.90 234.32 L975.20 338.60 L977.50 338.60 L979.80 234.32 L982.10 338.60 L984.40 312.20 L986.70 299.00 L989.00 338.60 L991.30 234.32 L993.60 338.60 L995.90 234.32 L998.20 234.32 L1000.50 338.60 L1002.80 234.32 L1005.10 338.60 L1007.40 123.44 L1009.70 338.60 L1012.00 234.32 L1014.30 333.32 L1016.60 234.32 L1018.90 333.32 L1021.20 234.32 L1023.50 301.64 L1025.80 234.32 L1028.10 333.32 L1030.40 234.32 L1032.70 333.32 L1035.00 234.32 L1037.30 301.64 L1039.60 234.32 L1041.90 333.32 L1044.20 234.32 L1046.50 333.32 L1048.80 234.32 L1051.10 301.64 L1053.40 234.32 L1055.70 333.32 L1058.50 234.32" fill="none" stroke="#7EB26D" stroke-width="1.5" stroke-linejoin="round"/><path d="M690.00 338.60 L690.00 338.60 L692.30 338.60 L694.60 338.60 L696.90 338.60 L699.20 338.60 L701.50 338.60 L703.80 338.60 L706.10 338.60 L708.40 338.60 L710.70 338.60 L713.00 338.60 L715.30 338.60 L717.60 338.60 L719.90 338.60 L722.20 338.60 L724.50 338.60 L726.80 338.60 L729.10 338.60 L731.40 338.60 L733.70 338.60 L736.00 338.60 L738.30 338.60 L740.60 338.60 L742.90 338.60 L745.20 338.60 L747.50 338.60 L749.80 338.60 L752.10 338.60 L754.40 338.60 L756.70 338.60 L759.00 338.60 L761.30 338.60 L763.60 338.60 L765.90 338.60 L768.20 338.60 L770.50 338.60 L772.80 338.60 L775.10 338.60 L777.40 338.60 L779.70 338.60 L782.00 338.60 L784.30 338.60 L786.60 338.60 L788.90 338.60 L791.20 338.60 L793.50 338.60 L795.80 338.60 L798.10 338.60 L800.40 338.60 L802.70 338.60 L805.00 338.60 L807.30 338.60 L809.60 338.60 L811.90 338.60 L814.20 338.60 L816.50 338.60 L818.80 338.60 L821.10 338.60 L823.40 338.60 L825.70 338.60 L828.00 325.40 L830.30 248.84 L832.60 338.60 L834.90 248.84 L837.20 338.60 L839.50 248.84 L841.80 338.60 L844.10 338.60 L846.40 248.84 L848.70 266.00 L851.00 266.00 L853.30 338.60 L855.60 338.60 L857.90 248.84 L860.20 193.40 L862.50 338.60 L864.80 338.60 L867.10 248.84 L869.40 305.60 L871.70 338.60 L874.00 258.08 L876.30 338.60 L878.60 338.60 L880.90 248.84 L883.20 338.60 L885.50 338.60 L887.80 314.84 L890.10 338.60 L892.40 322.76 L894.70 266.00 L897.00 266.00 L899.30 314.84 L901.60 338.60 L903.90 338.60 L906.20 338.60 L908.50 248.84 L910.80 338.60 L913.10 318.80 L915.40 338.60 L917.70 248.84 L920.00 338.60 L922.30 248.84 L924.60 248.84 L926.90 266.00 L929.20 266.00 L931.50 266.00 L933.80 248.84 L936.10 312.20 L938.40 338.60 L940.70 248.84 L943.00 338.60 L945.30 248.84 L947.60 338.60 L949.90 318.80 L952.20 338.60 L954.50 266.00 L956.80 338.60 L959.10 314.84 L961.40 248.84 L963.70 338.60 L966.00 318.80 L968.30 338.60 L970.60 312.20 L972.90 266.00 L975.20 338.60 L977.50 338.60 L979.80 266.00 L982.10 338.60 L984.40 314.84 L986.70 305.60 L989.00 338.60 L991.30 266.00 L993.60 338.60 L995.90 266.00 L998.20 248.84 L1000.50 338.60 L1002.80 266.00 L1005.10 338.60 L1007.40 127.40 L1009.70 338.60 L1012.00 266.00 L1014.30 338.60 L1016.60 266.00 L1018.90 338.60 L1021.20 248.84 L1023.50 309.56 L1025.80 266.00 L1028.10 266.00 L1030.40 266.00 L1032.70 338.60 L1035.00 248.84 L1037.30 266.00 L1039.60 266.00 L1041.90 266.00 L1044.20 266.00 L1046.50 338.60 L1048.80 248.84 L1051.10 338.60 L1053.40 266.00 L1055.70 338.60 L1058.50 248.84 L1058.50 338.60Z" fill="#EAB839" fill-opacity="0.1" stroke="none"/><path d="M690.00 338.60 L692.30 338.60 L694.60 338.60 L696.90 338.60 L699.20 338.60 L701.50 338.60 L703.80 338.60 L706.10 338.60 L708.40 338.60 L710.70 338.60 L713.00 338.60 L715.30 338.60 L717.60 338.60 L719.90 338.60 L722.20 338.60 L724.50 338.60 L726.80 338.60 L729.10 338.60 L731.40 338.60 L733.70 338.60 L736.00 338.60 L738.30 338.60 L740.60 338.60 L742.90 338.60 L745.20 338.60 L747.50 338.60 L749.80 338.60 L752.10 338.60 L754.40 338.60 L756.70 338.60 L759.00 338.60 L761.30 338.60 L763.60 338.60 L765.90 338.60 L768.20 338.60 L770.50 338.60 L772.80 338.60 L775.10 338.60 L777.40 338.60 L779.70 338.60 L782.00 338.60 L784.30 338.60 L786.60 338.60 L788.90 338.60 L791.20 338.60 L793.50 338.60 L795.80 338.60 L798.10 338.60 L800.40 338.60 L802.70 338.60 L805.00 338.60 L807.30 338.60 L809.60 338.60 L811.90 338.60 L814.20 338.60 L816.50 338.60 L818.80 338.60 L821.10 338.60 L823.40 338.60 L825.70 338.60 L828.00 325.40 L830.30 248.84 L832.60 338.60 L834.90 248.84 L837.20 338.60 L839.50 248.84 L841.80 338.60 L844.10 338.60 L846.40 248.84 L848.70 266.00 L851.00 266.00 L853.30 338.60 L855.60 338.60 L857.90 248.84 L860.20 193.40 L862.50 338.60 L864.80 338.60 L867.10 248.84 L869.40 305.60 L871.70 338.60 L874.00 258.08 L876.30 338.60 L878.60 338.60 L880.90 248.84 L883.20 338.60 L885.50 338.60 L887.80 314.84 L890.10 338.60 L892.40 322.76 L894.70 266.00 L897.00 266.00 L899.30 314.84 L901.60 338.60 L903.90 338.60 L906.20 338.60 L908.50 248.84 L910.80 338.60 L913.10 318.80 L915.40 338.60 L917.70 248.84 L920.00 338.60 L922.30 248.84 L924.60 248.84 L926.90 266.00 L929.20 266.00 L931.50 266.00 L933.80 248.84 L936.10 312.20 L938.40 338.60 L940.70 248.84 L943.00 338.60 L945.30 248.84 L947.60 338.60 L949.90 318.80 L952.20 338.60 L954.50 266.00 L956.80 338.60 L959.10 314.84 L961.40 248.84 L963.70 338.60 L966.00 318.80 L968.30 338.60 L970.60 312.20 L972.90 266.00 L975.20 338.60 L977.50 338.60 L979.80 266.00 L982.10 338.60 L984.40 314.84 L986.70 305.60 L989.00 338.60 L991.30 266.00 L993.60 338.60 L995.90 266.00 L998.20 248.84 L1000.50 338.60 L1002.80 266.00 L1005.10 338.60 L1007.40 127.40 L1009.70 338.60 L1012.00 266.00 L1014.30 338.60 L1016.60 266.00 L1018.90 338.60 L1021.20 248.84 L1023.50 309.56 L1025.80 266.00 L1028.10 266.00 L1030.40 266.00 L1032.70 338.60 L1035.00 248.84 L1037.30 266.00 L1039.60 266.00 L1041.90 266.00 L1044.20 266.00 L1046.50 338.60 L1048.80 248.84 L1051.10 338.60 L1053.40 266.00 L1055.70 338.60 L1058.50 248.84" fill="none" stroke="#EAB839" stroke-width="1.5" stroke-linejoin="round"/><path d="M690.00 338.60 L690.00 337.81 L692.30 337.81 L694.60 337.81 L696.90 337.81 L699.20 337.81 L701.50 337.81 L703.80 337.81 L706.10 337.81 L708.40 337.81 L710.70 337.81 L713.00 337.81 L715.30 337.81 L717.60 337.81 L719.90 337.81 L722.20 337.81 L724.50 337.81 L726.80 337.81 L729.10 337.81 L731.40 337.81 L733.70 337.81 L736.00 337.81 L738.30 337.81 L740.60 337.81 L742.90 337.81 L745.20 337.81 L747.50 337.81 L749.80 337.81 L752.10 337.81 L754.40 337.81 L756.70 337.81 L759.00 337.81 L761.30 337.81 L763.60 337.81 L765.90 337.81 L768.20 337.81 L770.50 337.81 L772.80 337.81 L775.10 337.81 L777.40 337.81 L779.70 337.81 L782.00 337.81 L784.30 337.81 L786.60 337.81 L788.90 337.81 L791.20 337.81 L793.50 337.81 L795.80 337.81 L798.10 337.81 L800.40 337.81 L802.70 337.81 L805.00 337.81 L807.30 337.81 L809.60 337.81 L811.90 337.81 L814.20 337.81 L816.50 337.81 L818.80 337.81 L821.10 337.81 L823.40 337.81 L825.70 337.81 L828.00 337.81 L830.30 337.81 L832.60 337.81 L834.90 321.44 L837.20 337.81 L839.50 337.81 L841.80 337.81 L844.10 321.44 L846.40 337.81 L848.70 337.81 L851.00 337.81 L853.30 337.81 L855.60 337.81 L857.90 337.81 L860.20 321.44 L862.50 337.81 L864.80 337.81 L867.10 321.44 L869.40 337.81 L871.70 337.81 L874.00 321.44 L876.30 337.81 L878.60 337.81 L880.90 321.44 L883.20 337.81 L885.50 337.81 L887.80 337.81 L890.10 337.81 L892.40 337.81 L894.70 337.81 L897.00 337.81 L899.30 337.81 L901.60 337.81 L903.90 337.81 L906.20 337.81 L908.50 321.44 L910.80 337.81 L913.10 337.81 L915.40 337.81 L917.70 321.44 L920.00 337.81 L922.30 337.81 L924.60 337.81 L926.90 337.81 L929.20 337.81 L931.50 337.81 L933.80 337.81 L936.10 321.44 L938.40 337.81 L940.70 321.44 L943.00 337.81 L945.30 321.44 L947.60 337.81 L949.90 337.81 L952.20 337.81 L954.50 321.44 L956.80 337.81 L959.10 337.81 L961.40 337.81 L963.70 337.81 L966.00 337.81 L968.30 337.81 L970.60 337.81 L972.90 337.81 L975.20 337.81 L977.50 337.81 L979.80 337.81 L982.10 337.81 L984.40 337.81 L986.70 337.81 L989.00 337.81 L991.30 337.81 L993.60 337.81 L995.90 337.81 L998.20 321.44 L1000.50 337.81 L1002.80 337.81 L1005.10 337.81 L1007.40 337.81 L1009.70 337.81 L1012.00 337.81 L1014.30 337.81 L1016.60 337.81 L1018.90 337.81 L1021.20 337.81 L1023.50 337.81 L1025.80 337.81 L1028.10 337.81 L1030.40 337.81 L1032.70 337.81 L1035.00 337.81 L1037.30 337.81 L1039.60 337.81 L1041.90 337.81 L1044.20 337.81 L1046.50 337.81 L1048.80 337.81 L1051.10 337.81 L1053.40 337.81 L1055.70 316.16 L1058.50 337.81 L1058.50 338.60Z" fill="#6ED0E0" fill-opacity="0.1" stroke="none"/><path d="M690.00 337.81 L692.30 337.81 L694.60 337.81 L696.90 337.81 L699.20 337.81 L701.50 337.81 L703.80 337.81 L706.10 337.81 L708.40 337.81 L710.70 337.81 L713.00 337.81 L715.30 337.81 L717.60 337.81 L719.90 337.81 L722.20 337.81 L724.50 337.81 L726.80 337.81 L729.10 337.81 L731.40 337.81 L733.70 337.81 L736.00 337.81 L738.30 337.81 L740.60 337.81 L742.90 337.81 L745.20 337.81 L747.50 337.81 L749.80 337.81 L752.10 337.81 L754.40 337.81 L756.70 337.81 L759.00 337.81 L761.30 337.81 L763.60 337.81 L765.90 337.81 L768.20 337.81 L770.50 337.81 L772.80 337.81 L775.10 337.81 L777.40 337.81 L779.70 337.81 L782.00 337.81 L784.30 337.81 L786.60 337.81 L788.90 337.81 L791.20 337.81 L793.50 337.81 L795.80 337.81 L798.10 337.81 L800.40 337.81 L802.70 337.81 L805.00 337.81 L807.30 337.81 L809.60 337.81 L811.90 337.81 L814.20 337.81 L816.50 337.81 L818.80 337.81 L821.10 337.81 L823.40 337.81 L825.70 337.81 L828.00 337.81 L830.30 337.81 L832.60 337.81 L834.90 321.44 L837.20 337.81 L839.50 337.81 L841.80 337.81 L844.10 321.44 L846.40 337.81 L848.70 337.81 L851.00 337.81 L853.30 337.81 L855.60 337.81 L857.90 337.81 L860.20 321.44 L862.50 337.81 L864.80 337.81 L867.10 321.44 L869.40 337.81 L871.70 337.81 L874.00 321.44 L876.30 337.81 L878.60 337.81 L880.90 321.44 L883.20 337.81 L885.50 337.81 L887.80 337.81 L890.10 337.81 L892.40 337.81 L894.70 337.81 L897.00 337.81 L899.30 337.81 L901.60 337.81 L903.90 337.81 L906.20 337.81 L908.50 321.44 L910.80 337.81 L913.10 337.81 L915.40 337.81 L917.70 321.44 L920.00 337.81 L922.30 337.81 L924.60 337.81 L926.90 337.81 L929.20 337.81 L931.50 337.81 L933.80 337.81 L936.10 321.44 L938.40 337.81 L940.70 321.44 L943.00 337.81 L945.30 321.44 L947.60 337.81 L949.90 337.81 L952.20 337.81 L954.50 321.44 L956.80 337.81 L959.10 337.81 L961.40 337.81 L963.70 337.81 L966.00 337.81 L968.30 337.81 L970.60 337.81 L972.90 337.81 L975.20 337.81 L977.50 337.81 L979.80 337.81 L982.10 337.81 L984.40 337.81 L986.70 337.81 L989.00 337.81 L991.30 337.81 L993.60 337.81 L995.90 337.81 L998.20 321.44 L1000.50 337.81 L1002.80 337.81 L1005.10 337.81 L1007.40 337.81 L1009.70 337.81 L1012.00 337.81 L1014.30 337.81 L1016.60 337.81 L1018.90 337.81 L1021.20 337.81 L1023.50 337.81 L1025.80 337.81 L1028.10 337.81 L1030.40 337.81 L1032.70 337.81 L1035.00 337.81 L1037.30 337.81 L1039.60 337.81 L1041.90 337.81 L1044.20 337.81 L1046.50 337.81 L1048.80 337.81 L1051.10 337.81 L1053.40 337.81 L1055.70 316.16 L1058.50 337.81" fill="none" stroke="#6ED0E0" stroke-width="1.5" stroke-linejoin="round"/><circle cx="1042" cy="234.5" r="3.5" fill="none" stroke="#7EB26D" stroke-opacity="0.6" stroke-width="1.5"/><circle cx="1042" cy="266.5" r="3.5" fill="none" stroke="#EAB839" stroke-opacity="0.6" stroke-width="1.5"/><circle cx="1042" cy="338" r="3.5" fill="none" stroke="#6ED0E0" stroke-opacity="0.6" stroke-width="1.5"/></g><clipPath id="c5"><rect x="691" y="460" width="464" height="250"/></clipPath><g clip-path="url(#c5)"><path d="M691.00 702.30 L691.00 702.30 L692.93 702.30 L694.86 702.30 L696.79 702.30 L698.72 702.30 L700.65 702.30 L702.58 702.30 L704.51 702.30 L706.44 702.30 L708.37 702.30 L710.30 702.30 L712.23 702.30 L714.16 702.30 L716.09 702.30 L718.02 702.30 L719.95 702.30 L721.88 702.30 L723.81 702.30 L725.74 702.30 L727.67 702.30 L729.60 702.30 L731.53 702.30 L733.46 702.30 L735.39 702.30 L737.32 702.30 L739.25 702.30 L741.18 702.30 L743.11 702.30 L745.04 702.30 L746.97 702.30 L748.90 702.30 L750.83 702.30 L752.76 702.30 L754.69 702.30 L756.62 702.30 L758.55 702.30 L760.48 702.30 L762.41 702.30 L764.34 702.30 L766.27 702.30 L768.20 702.30 L770.13 702.30 L772.06 702.30 L773.99 702.30 L775.92 702.30 L777.85 702.30 L779.78 702.30 L781.71 702.30 L783.64 702.30 L785.57 702.30 L787.50 702.30 L789.43 702.30 L791.36 702.30 L793.29 702.30 L795.22 702.30 L797.15 702.30 L799.08 702.30 L801.01 702.30 L802.94 702.30 L804.87 702.30 L806.80 702.30 L808.73 702.30 L810.66 702.30 L812.59 702.30 L814.52 702.30 L816.45 702.30 L818.38 702.30 L820.31 702.30 L822.24 702.30 L824.17 702.30 L826.10 702.30 L828.03 702.30 L829.96 702.30 L831.89 702.30 L833.82 702.30 L835.75 702.30 L837.68 702.30 L839.61 702.30 L841.54 702.30 L843.47 702.30 L845.40 702.30 L847.33 702.30 L849.26 702.30 L851.19 702.30 L853.12 702.30 L855.05 702.30 L856.98 675.81 L858.91 675.81 L860.84 645.64 L862.77 643.76 L864.70 645.51 L866.63 644.22 L868.56 643.99 L870.49 702.30 L872.42 645.18 L874.35 645.07 L876.28 644.26 L878.21 643.72 L880.14 644.39 L882.07 644.65 L884.00 702.30 L885.93 644.95 L887.86 644.26 L889.79 644.90 L891.72 644.67 L893.65 644.46 L895.58 644.45 L897.51 595.41 L899.44 684.03 L901.37 644.29 L903.30 644.59 L905.23 595.41 L907.16 645.72 L909.09 645.33 L911.02 595.41 L912.95 644.20 L914.88 645.41 L916.81 644.16 L918.74 702.30 L920.67 645.17 L922.60 644.02 L924.53 645.60 L926.46 643.79 L928.39 645.16 L930.32 645.05 L932.25 645.39 L934.18 644.81 L936.11 702.30 L938.04 645.35 L939.97 644.62 L941.90 644.87 L943.83 645.18 L945.76 645.55 L947.69 644.31 L949.62 644.93 L951.55 644.81 L953.48 702.30 L955.41 702.30 L957.34 675.81 L959.27 644.74 L961.20 702.30 L963.13 644.59 L965.06 644.49 L966.99 645.21 L968.92 644.71 L970.85 643.66 L972.78 644.41 L974.71 644.65 L976.64 645.70 L978.57 644.80 L980.50 645.79 L982.43 643.73 L984.36 644.71 L986.29 644.52 L988.22 644.35 L990.15 595.41 L992.08 644.04 L994.01 644.31 L995.94 645.68 L997.87 643.83 L999.80 643.94 L1001.73 643.67 L1003.66 645.64 L1005.59 643.83 L1007.52 644.13 L1009.45 645.28 L1011.38 645.67 L1013.31 644.36 L1015.24 645.70 L1017.17 643.96 L1019.10 667.33 L1021.03 643.70 L1022.96 652.03 L1024.89 675.46 L1026.82 643.97 L1028.75 654.10 L1030.68 645.90 L1032.61 668.27 L1034.54 645.59 L1036.47 659.10 L1038.40 590.84 L1040.33 645.60 L1042.26 649.39 L1044.19 666.73 L1046.12 645.72 L1048.05 667.30 L1049.98 645.31 L1051.91 655.49 L1053.84 670.24 L1055.77 644.20 L1057.70 645.86 L1059.63 672.72 L1061.56 644.96 L1063.49 669.23 L1065.42 645.21 L1067.35 656.62 L1069.28 675.48 L1071.21 645.16 L1073.14 649.47 L1075.07 668.69 L1077.00 645.25 L1078.93 654.62 L1080.86 695.82 L1082.79 645.28 L1084.72 652.07 L1086.65 665.64 L1088.58 645.19 L1090.51 478.47 L1092.44 673.06 L1094.37 673.06 L1096.30 673.06 L1098.23 673.06 L1100.16 673.06 L1102.09 649.53 L1104.02 669.04 L1105.95 595.41 L1107.88 650.61 L1109.81 654.38 L1111.74 643.88 L1113.67 644.02 L1115.60 645.27 L1117.53 645.84 L1119.46 644.52 L1121.39 645.38 L1123.32 645.34 L1125.25 644.45 L1127.18 645.59 L1129.11 644.98 L1131.04 643.92 L1132.97 589.01 L1134.90 649.93 L1136.83 669.69 L1138.76 644.44 L1140.69 649.04 L1142.62 673.18 L1144.55 645.16 L1146.48 653.33 L1148.41 670.42 L1150.34 644.86 L1152.27 652.93 L1155.00 651.14 L1155.00 702.30Z" fill="#7EB26D" fill-opacity="0.1" stroke="none"/><path d="M691.00 702.30 L692.93 702.30 L694.86 702.30 L696.79 702.30 L698.72 702.30 L700.65 702.30 L702.58 702.30 L704.51 702.30 L706.44 702.30 L708.37 702.30 L710.30 702.30 L712.23 702.30 L714.16 702.30 L716.09 702.30 L718.02 702.30 L719.95 702.30 L721.88 702.30 L723.81 702.30 L725.74 702.30 L727.67 702.30 L729.60 702.30 L731.53 702.30 L733.46 702.30 L735.39 702.30 L737.32 702.30 L739.25 702.30 L741.18 702.30 L743.11 702.30 L745.04 702.30 L746.97 702.30 L748.90 702.30 L750.83 702.30 L752.76 702.30 L754.69 702.30 L756.62 702.30 L758.55 702.30 L760.48 702.30 L762.41 702.30 L764.34 702.30 L766.27 702.30 L768.20 702.30 L770.13 702.30 L772.06 702.30 L773.99 702.30 L775.92 702.30 L777.85 702.30 L779.78 702.30 L781.71 702.30 L783.64 702.30 L785.57 702.30 L787.50 702.30 L789.43 702.30 L791.36 702.30 L793.29 702.30 L795.22 702.30 L797.15 702.30 L799.08 702.30 L801.01 702.30 L802.94 702.30 L804.87 702.30 L806.80 702.30 L808.73 702.30 L810.66 702.30 L812.59 702.30 L814.52 702.30 L816.45 702.30 L818.38 702.30 L820.31 702.30 L822.24 702.30 L824.17 702.30 L826.10 702.30 L828.03 702.30 L829.96 702.30 L831.89 702.30 L833.82 702.30 L835.75 702.30 L837.68 702.30 L839.61 702.30 L841.54 702.30 L843.47 702.30 L845.40 702.30 L847.33 702.30 L849.26 702.30 L851.19 702.30 L853.12 702.30 L855.05 702.30 L856.98 675.81 L858.91 675.81 L860.84 645.64 L862.77 643.76 L864.70 645.51 L866.63 644.22 L868.56 643.99 L870.49 702.30 L872.42 645.18 L874.35 645.07 L876.28 644.26 L878.21 643.72 L880.14 644.39 L882.07 644.65 L884.00 702.30 L885.93 644.95 L887.86 644.26 L889.79 644.90 L891.72 644.67 L893.65 644.46 L895.58 644.45 L897.51 595.41 L899.44 684.03 L901.37 644.29 L903.30 644.59 L905.23 595.41 L907.16 645.72 L909.09 645.33 L911.02 595.41 L912.95 644.20 L914.88 645.41 L916.81 644.16 L918.74 702.30 L920.67 645.17 L922.60 644.02 L924.53 645.60 L926.46 643.79 L928.39 645.16 L930.32 645.05 L932.25 645.39 L934.18 644.81 L936.11 702.30 L938.04 645.35 L939.97 644.62 L941.90 644.87 L943.83 645.18 L945.76 645.55 L947.69 644.31 L949.62 644.93 L951.55 644.81 L953.48 702.30 L955.41 702.30 L957.34 675.81 L959.27 644.74 L961.20 702.30 L963.13 644.59 L965.06 644.49 L966.99 645.21 L968.92 644.71 L970.85 643.66 L972.78 644.41 L974.71 644.65 L976.64 645.70 L978.57 644.80 L980.50 645.79 L982.43 643.73 L984.36 644.71 L986.29 644.52 L988.22 644.35 L990.15 595.41 L992.08 644.04 L994.01 644.31 L995.94 645.68 L997.87 643.83 L999.80 643.94 L1001.73 643.67 L1003.66 645.64 L1005.59 643.83 L1007.52 644.13 L1009.45 645.28 L1011.38 645.67 L1013.31 644.36 L1015.24 645.70 L1017.17 643.96 L1019.10 667.33 L1021.03 643.70 L1022.96 652.03 L1024.89 675.46 L1026.82 643.97 L1028.75 654.10 L1030.68 645.90 L1032.61 668.27 L1034.54 645.59 L1036.47 659.10 L1038.40 590.84 L1040.33 645.60 L1042.26 649.39 L1044.19 666.73 L1046.12 645.72 L1048.05 667.30 L1049.98 645.31 L1051.91 655.49 L1053.84 670.24 L1055.77 644.20 L1057.70 645.86 L1059.63 672.72 L1061.56 644.96 L1063.49 669.23 L1065.42 645.21 L1067.35 656.62 L1069.28 675.48 L1071.21 645.16 L1073.14 649.47 L1075.07 668.69 L1077.00 645.25 L1078.93 654.62 L1080.86 695.82 L1082.79 645.28 L1084.72 652.07 L1086.65 665.64 L1088.58 645.19 L1090.51 478.47 L1092.44 673.06 L1094.37 673.06 L1096.30 673.06 L1098.23 673.06 L1100.16 673.06 L1102.09 649.53 L1104.02 669.04 L1105.95 595.41 L1107.88 650.61 L1109.81 654.38 L1111.74 643.88 L1113.67 644.02 L1115.60 645.27 L1117.53 645.84 L1119.46 644.52 L1121.39 645.38 L1123.32 645.34 L1125.25 644.45 L1127.18 645.59 L1129.11 644.98 L1131.04 643.92 L1132.97 589.01 L1134.90 649.93 L1136.83 669.69 L1138.76 644.44 L1140.69 649.04 L1142.62 673.18 L1144.55 645.16 L1146.48 653.33 L1148.41 670.42 L1150.34 644.86 L1152.27 652.93 L1155.00 651.14" fill="none" stroke="#7EB26D" stroke-width="1.5" stroke-linejoin="round"/><path d="M691.00 702.30 L691.00 702.30 L692.93 702.30 L694.86 702.30 L696.79 702.30 L698.72 702.30 L700.65 702.30 L702.58 702.30 L704.51 702.30 L706.44 702.30 L708.37 702.30 L710.30 702.30 L712.23 702.30 L714.16 702.30 L716.09 702.30 L718.02 702.30 L719.95 702.30 L721.88 702.30 L723.81 702.30 L725.74 702.30 L727.67 702.30 L729.60 702.30 L731.53 702.30 L733.46 702.30 L735.39 702.30 L737.32 702.30 L739.25 702.30 L741.18 702.30 L743.11 702.30 L745.04 702.30 L746.97 702.30 L748.90 702.30 L750.83 702.30 L752.76 702.30 L754.69 702.30 L756.62 702.30 L758.55 702.30 L760.48 702.30 L762.41 702.30 L764.34 702.30 L766.27 702.30 L768.20 702.30 L770.13 702.30 L772.06 702.30 L773.99 702.30 L775.92 702.30 L777.85 702.30 L779.78 702.30 L781.71 702.30 L783.64 702.30 L785.57 702.30 L787.50 702.30 L789.43 702.30 L791.36 702.30 L793.29 702.30 L795.22 702.30 L797.15 702.30 L799.08 702.30 L801.01 702.30 L802.94 702.30 L804.87 702.30 L806.80 702.30 L808.73 702.30 L810.66 702.30 L812.59 702.30 L814.52 702.30 L816.45 702.30 L818.38 702.30 L820.31 702.30 L822.24 702.30 L824.17 702.30 L826.10 702.30 L828.03 702.30 L829.96 702.30 L831.89 702.30 L833.82 702.30 L835.75 702.30 L837.68 702.30 L839.61 702.30 L841.54 702.30 L843.47 702.30 L845.40 702.30 L847.33 702.30 L849.26 702.30 L851.19 702.30 L853.12 702.30 L855.05 702.30 L856.98 696.82 L858.91 693.16 L860.84 677.91 L862.77 669.09 L864.70 660.27 L866.63 651.46 L868.56 657.18 L870.49 702.30 L872.42 655.59 L874.35 659.43 L876.28 656.49 L878.21 658.81 L880.14 665.59 L882.07 673.29 L884.00 702.30 L885.93 654.49 L887.86 653.64 L889.79 658.21 L891.72 650.83 L893.65 654.43 L895.58 650.94 L897.51 650.22 L899.44 702.30 L901.37 654.42 L903.30 650.40 L905.23 650.22 L907.16 656.40 L909.09 672.30 L911.02 650.22 L912.95 675.89 L914.88 653.66 L916.81 652.51 L918.74 702.30 L920.67 657.05 L922.60 658.86 L924.53 657.03 L926.46 651.79 L928.39 661.43 L930.32 671.92 L932.25 653.14 L934.18 668.09 L936.11 702.30 L938.04 673.15 L939.97 662.13 L941.90 657.09 L943.83 666.97 L945.76 661.14 L947.69 654.02 L949.62 657.24 L951.55 667.05 L953.48 702.30 L955.41 702.30 L957.34 693.16 L959.27 656.62 L961.20 702.30 L963.13 650.22 L965.06 663.65 L966.99 659.64 L968.92 650.22 L970.85 665.99 L972.78 666.98 L974.71 650.22 L976.64 665.67 L978.57 670.38 L980.50 650.22 L982.43 671.18 L984.36 663.39 L986.29 650.22 L988.22 659.44 L990.15 682.20 L992.08 650.22 L994.01 670.53 L995.94 667.44 L997.87 650.22 L999.80 659.46 L1001.73 667.62 L1003.66 650.22 L1005.59 660.22 L1007.52 657.54 L1009.45 650.22 L1011.38 658.81 L1013.31 662.45 L1015.24 650.22 L1017.17 665.27 L1019.10 698.81 L1021.03 655.67 L1022.96 672.08 L1024.89 701.95 L1026.82 656.75 L1028.75 682.49 L1030.68 672.49 L1032.61 696.05 L1034.54 657.46 L1036.47 688.42 L1038.40 638.35 L1040.33 654.46 L1042.26 669.64 L1044.19 698.52 L1046.12 661.43 L1048.05 701.85 L1049.98 658.52 L1051.91 676.07 L1053.84 698.26 L1055.77 661.10 L1057.70 682.91 L1059.63 695.16 L1061.56 666.11 L1063.49 697.65 L1065.42 651.84 L1067.35 685.35 L1069.28 698.50 L1071.21 655.45 L1073.14 678.42 L1075.07 699.49 L1077.00 654.97 L1078.93 682.80 L1080.86 698.56 L1082.79 666.00 L1084.72 676.54 L1086.65 701.08 L1088.58 661.95 L1090.51 572.57 L1092.44 682.20 L1094.37 682.20 L1096.30 682.20 L1098.23 682.20 L1100.16 682.20 L1102.09 680.48 L1104.02 699.55 L1105.95 662.40 L1107.88 683.65 L1109.81 678.17 L1111.74 664.27 L1113.67 656.82 L1115.60 660.65 L1117.53 653.39 L1119.46 654.19 L1121.39 657.83 L1123.32 655.53 L1125.25 666.92 L1127.18 663.24 L1129.11 658.55 L1131.04 654.51 L1132.97 675.29 L1134.90 682.94 L1136.83 700.83 L1138.76 664.59 L1140.69 682.26 L1142.62 695.82 L1144.55 664.98 L1146.48 680.13 L1148.41 702.06 L1150.34 661.17 L1152.27 686.73 L1155.00 665.76 L1155.00 702.30Z" fill="#EAB839" fill-opacity="0.1" stroke="none"/><path d="M691.00 702.30 L692.93 702.30 L694.86 702.30 L696.79 702.30 L698.72 702.30 L700.65 702.30 L702.58 702.30 L704.51 702.30 L706.44 702.30 L708.37 702.30 L710.30 702.30 L712.23 702.30 L714.16 702.30 L716.09 702.30 L718.02 702.30 L719.95 702.30 L721.88 702.30 L723.81 702.30 L725.74 702.30 L727.67 702.30 L729.60 702.30 L731.53 702.30 L733.46 702.30 L735.39 702.30 L737.32 702.30 L739.25 702.30 L741.18 702.30 L743.11 702.30 L745.04 702.30 L746.97 702.30 L748.90 702.30 L750.83 702.30 L752.76 702.30 L754.69 702.30 L756.62 702.30 L758.55 702.30 L760.48 702.30 L762.41 702.30 L764.34 702.30 L766.27 702.30 L768.20 702.30 L770.13 702.30 L772.06 702.30 L773.99 702.30 L775.92 702.30 L777.85 702.30 L779.78 702.30 L781.71 702.30 L783.64 702.30 L785.57 702.30 L787.50 702.30 L789.43 702.30 L791.36 702.30 L793.29 702.30 L795.22 702.30 L797.15 702.30 L799.08 702.30 L801.01 702.30 L802.94 702.30 L804.87 702.30 L806.80 702.30 L808.73 702.30 L810.66 702.30 L812.59 702.30 L814.52 702.30 L816.45 702.30 L818.38 702.30 L820.31 702.30 L822.24 702.30 L824.17 702.30 L826.10 702.30 L828.03 702.30 L829.96 702.30 L831.89 702.30 L833.82 702.30 L835.75 702.30 L837.68 702.30 L839.61 702.30 L841.54 702.30 L843.47 702.30 L845.40 702.30 L847.33 702.30 L849.26 702.30 L851.19 702.30 L853.12 702.30 L855.05 702.30 L856.98 696.82 L858.91 693.16 L860.84 677.91 L862.77 669.09 L864.70 660.27 L866.63 651.46 L868.56 657.18 L870.49 702.30 L872.42 655.59 L874.35 659.43 L876.28 656.49 L878.21 658.81 L880.14 665.59 L882.07 673.29 L884.00 702.30 L885.93 654.49 L887.86 653.64 L889.79 658.21 L891.72 650.83 L893.65 654.43 L895.58 650.94 L897.51 650.22 L899.44 702.30 L901.37 654.42 L903.30 650.40 L905.23 650.22 L907.16 656.40 L909.09 672.30 L911.02 650.22 L912.95 675.89 L914.88 653.66 L916.81 652.51 L918.74 702.30 L920.67 657.05 L922.60 658.86 L924.53 657.03 L926.46 651.79 L928.39 661.43 L930.32 671.92 L932.25 653.14 L934.18 668.09 L936.11 702.30 L938.04 673.15 L939.97 662.13 L941.90 657.09 L943.83 666.97 L945.76 661.14 L947.69 654.02 L949.62 657.24 L951.55 667.05 L953.48 702.30 L955.41 702.30 L957.34 693.16 L959.27 656.62 L961.20 702.30 L963.13 650.22 L965.06 663.65 L966.99 659.64 L968.92 650.22 L970.85 665.99 L972.78 666.98 L974.71 650.22 L976.64 665.67 L978.57 670.38 L980.50 650.22 L982.43 671.18 L984.36 663.39 L986.29 650.22 L988.22 659.44 L990.15 682.20 L992.08 650.22 L994.01 670.53 L995.94 667.44 L997.87 650.22 L999.80 659.46 L1001.73 667.62 L1003.66 650.22 L1005.59 660.22 L1007.52 657.54 L1009.45 650.22 L1011.38 658.81 L1013.31 662.45 L1015.24 650.22 L1017.17 665.27 L1019.10 698.81 L1021.03 655.67 L1022.96 672.08 L1024.89 701.95 L1026.82 656.75 L1028.75 682.49 L1030.68 672.49 L1032.61 696.05 L1034.54 657.46 L1036.47 688.42 L1038.40 638.35 L1040.33 654.46 L1042.26 669.64 L1044.19 698.52 L1046.12 661.43 L1048.05 701.85 L1049.98 658.52 L1051.91 676.07 L1053.84 698.26 L1055.77 661.10 L1057.70 682.91 L1059.63 695.16 L1061.56 666.11 L1063.49 697.65 L1065.42 651.84 L1067.35 685.35 L1069.28 698.50 L1071.21 655.45 L1073.14 678.42 L1075.07 699.49 L1077.00 654.97 L1078.93 682.80 L1080.86 698.56 L1082.79 666.00 L1084.72 676.54 L1086.65 701.08 L1088.58 661.95 L1090.51 572.57 L1092.44 682.20 L1094.37 682.20 L1096.30 682.20 L1098.23 682.20 L1100.16 682.20 L1102.09 680.48 L1104.02 699.55 L1105.95 662.40 L1107.88 683.65 L1109.81 678.17 L1111.74 664.27 L1113.67 656.82 L1115.60 660.65 L1117.53 653.39 L1119.46 654.19 L1121.39 657.83 L1123.32 655.53 L1125.25 666.92 L1127.18 663.24 L1129.11 658.55 L1131.04 654.51 L1132.97 675.29 L1134.90 682.94 L1136.83 700.83 L1138.76 664.59 L1140.69 682.26 L1142.62 695.82 L1144.55 664.98 L1146.48 680.13 L1148.41 702.06 L1150.34 661.17 L1152.27 686.73 L1155.00 665.76" fill="none" stroke="#EAB839" stroke-width="1.5" stroke-linejoin="round"/><path d="M691.00 702.30 L691.00 701.57 L692.93 701.57 L694.86 701.57 L696.79 701.57 L698.72 701.57 L700.65 701.57 L702.58 701.57 L704.51 701.57 L706.44 701.57 L708.37 701.57 L710.30 701.57 L712.23 701.57 L714.16 701.57 L716.09 701.57 L718.02 701.57 L719.95 701.57 L721.88 701.57 L723.81 701.57 L725.74 701.57 L727.67 701.57 L729.60 701.57 L731.53 701.57 L733.46 701.57 L735.39 701.57 L737.32 701.57 L739.25 701.57 L741.18 701.57 L743.11 701.57 L745.04 701.57 L746.97 701.57 L748.90 701.57 L750.83 701.57 L752.76 701.57 L754.69 701.57 L756.62 701.57 L758.55 701.57 L760.48 701.57 L762.41 701.57 L764.34 701.57 L766.27 701.57 L768.20 701.57 L770.13 701.57 L772.06 701.57 L773.99 701.57 L775.92 701.57 L777.85 701.57 L779.78 701.57 L781.71 701.57 L783.64 701.57 L785.57 701.57 L787.50 701.57 L789.43 701.57 L791.36 701.57 L793.29 701.57 L795.22 701.57 L797.15 701.57 L799.08 701.57 L801.01 701.57 L802.94 701.57 L804.87 701.57 L806.80 701.57 L808.73 701.57 L810.66 701.57 L812.59 701.57 L814.52 701.57 L816.45 701.57 L818.38 701.57 L820.31 701.57 L822.24 701.57 L824.17 701.57 L826.10 701.57 L828.03 701.57 L829.96 701.57 L831.89 701.57 L833.82 701.57 L835.75 701.57 L837.68 701.57 L839.61 701.57 L841.54 701.57 L843.47 701.57 L845.40 701.57 L847.33 701.57 L849.26 701.57 L851.19 701.57 L853.12 701.57 L855.05 701.57 L856.98 701.57 L858.91 701.57 L860.84 701.57 L862.77 701.57 L864.70 701.57 L866.63 701.57 L868.56 701.57 L870.49 701.57 L872.42 701.57 L874.35 701.57 L876.28 701.57 L878.21 701.57 L880.14 701.57 L882.07 701.57 L884.00 701.57 L885.93 701.57 L887.86 701.57 L889.79 701.57 L891.72 701.57 L893.65 701.57 L895.58 701.57 L897.51 701.57 L899.44 701.57 L901.37 701.57 L903.30 701.57 L905.23 701.57 L907.16 701.57 L909.09 701.57 L911.02 701.57 L912.95 701.57 L914.88 701.57 L916.81 701.57 L918.74 701.57 L920.67 701.57 L922.60 701.57 L924.53 701.57 L926.46 701.57 L928.39 701.57 L930.32 701.57 L932.25 701.57 L934.18 701.57 L936.11 701.57 L938.04 701.57 L939.97 701.57 L941.90 701.57 L943.83 701.57 L945.76 701.57 L947.69 701.57 L949.62 701.57 L951.55 701.57 L953.48 701.57 L955.41 701.57 L957.34 701.57 L959.27 701.57 L961.20 701.57 L963.13 701.57 L965.06 701.57 L966.99 701.57 L968.92 701.57 L970.85 701.57 L972.78 701.57 L974.71 701.57 L976.64 701.57 L978.57 701.57 L980.50 701.57 L982.43 701.57 L984.36 701.57 L986.29 701.57 L988.22 701.57 L990.15 701.57 L992.08 701.57 L994.01 701.57 L995.94 701.57 L997.87 701.57 L999.80 701.57 L1001.73 701.57 L1003.66 701.57 L1005.59 701.57 L1007.52 701.57 L1009.45 701.57 L1011.38 685.86 L1013.31 701.57 L1015.24 701.57 L1017.17 701.57 L1019.10 701.57 L1021.03 701.57 L1022.96 701.57 L1024.89 701.57 L1026.82 701.57 L1028.75 701.57 L1030.68 701.57 L1032.61 701.57 L1034.54 701.57 L1036.47 701.57 L1038.40 701.57 L1040.33 701.57 L1042.26 701.57 L1044.19 701.57 L1046.12 701.57 L1048.05 701.57 L1049.98 701.57 L1051.91 701.57 L1053.84 701.57 L1055.77 701.57 L1057.70 701.57 L1059.63 701.57 L1061.56 701.57 L1063.49 701.57 L1065.42 701.57 L1067.35 701.57 L1069.28 701.57 L1071.21 701.57 L1073.14 701.57 L1075.07 701.57 L1077.00 701.57 L1078.93 683.11 L1080.86 701.57 L1082.79 701.57 L1084.72 701.57 L1086.65 701.57 L1088.58 701.57 L1090.51 701.57 L1092.44 701.57 L1094.37 701.57 L1096.30 701.57 L1098.23 701.57 L1100.16 701.57 L1102.09 701.57 L1104.02 701.57 L1105.95 701.57 L1107.88 701.57 L1109.81 701.57 L1111.74 701.57 L1113.67 701.57 L1115.60 701.57 L1117.53 701.57 L1119.46 701.57 L1121.39 701.57 L1123.32 701.57 L1125.25 701.57 L1127.18 701.57 L1129.11 701.57 L1131.04 701.57 L1132.97 701.57 L1134.90 701.57 L1136.83 701.57 L1138.76 701.57 L1140.69 701.57 L1142.62 701.57 L1144.55 701.57 L1146.48 701.57 L1148.41 701.57 L1150.34 676.72 L1152.27 701.57 L1155.00 701.57 L1155.00 702.30Z" fill="#6ED0E0" fill-opacity="0.1" stroke="none"/><path d="M691.00 701.57 L692.93 701.57 L694.86 701.57 L696.79 701.57 L698.72 701.57 L700.65 701.57 L702.58 701.57 L704.51 701.57 L706.44 701.57 L708.37 701.57 L710.30 701.57 L712.23 701.57 L714.16 701.57 L716.09 701.57 L718.02 701.57 L719.95 701.57 L721.88 701.57 L723.81 701.57 L725.74 701.57 L727.67 701.57 L729.60 701.57 L731.53 701.57 L733.46 701.57 L735.39 701.57 L737.32 701.57 L739.25 701.57 L741.18 701.57 L743.11 701.57 L745.04 701.57 L746.97 701.57 L748.90 701.57 L750.83 701.57 L752.76 701.57 L754.69 701.57 L756.62 701.57 L758.55 701.57 L760.48 701.57 L762.41 701.57 L764.34 701.57 L766.27 701.57 L768.20 701.57 L770.13 701.57 L772.06 701.57 L773.99 701.57 L775.92 701.57 L777.85 701.57 L779.78 701.57 L781.71 701.57 L783.64 701.57 L785.57 701.57 L787.50 701.57 L789.43 701.57 L791.36 701.57 L793.29 701.57 L795.22 701.57 L797.15 701.57 L799.08 701.57 L801.01 701.57 L802.94 701.57 L804.87 701.57 L806.80 701.57 L808.73 701.57 L810.66 701.57 L812.59 701.57 L814.52 701.57 L816.45 701.57 L818.38 701.57 L820.31 701.57 L822.24 701.57 L824.17 701.57 L826.10 701.57 L828.03 701.57 L829.96 701.57 L831.89 701.57 L833.82 701.57 L835.75 701.57 L837.68 701.57 L839.61 701.57 L841.54 701.57 L843.47 701.57 L845.40 701.57 L847.33 701.57 L849.26 701.57 L851.19 701.57 L853.12 701.57 L855.05 701.57 L856.98 701.57 L858.91 701.57 L860.84 701.57 L862.77 701.57 L864.70 701.57 L866.63 701.57 L868.56 701.57 L870.49 701.57 L872.42 701.57 L874.35 701.57 L876.28 701.57 L878.21 701.57 L880.14 701.57 L882.07 701.57 L884.00 701.57 L885.93 701.57 L887.86 701.57 L889.79 701.57 L891.72 701.57 L893.65 701.57 L895.58 701.57 L897.51 701.57 L899.44 701.57 L901.37 701.57 L903.30 701.57 L905.23 701.57 L907.16 701.57 L909.09 701.57 L911.02 701.57 L912.95 701.57 L914.88 701.57 L916.81 701.57 L918.74 701.57 L920.67 701.57 L922.60 701.57 L924.53 701.57 L926.46 701.57 L928.39 701.57 L930.32 701.57 L932.25 701.57 L934.18 701.57 L936.11 701.57 L938.04 701.57 L939.97 701.57 L941.90 701.57 L943.83 701.57 L945.76 701.57 L947.69 701.57 L949.62 701.57 L951.55 701.57 L953.48 701.57 L955.41 701.57 L957.34 701.57 L959.27 701.57 L961.20 701.57 L963.13 701.57 L965.06 701.57 L966.99 701.57 L968.92 701.57 L970.85 701.57 L972.78 701.57 L974.71 701.57 L976.64 701.57 L978.57 701.57 L980.50 701.57 L982.43 701.57 L984.36 701.57 L986.29 701.57 L988.22 701.57 L990.15 701.57 L992.08 701.57 L994.01 701.57 L995.94 701.57 L997.87 701.57 L999.80 701.57 L1001.73 701.57 L1003.66 701.57 L1005.59 701.57 L1007.52 701.57 L1009.45 701.57 L1011.38 685.86 L1013.31 701.57 L1015.24 701.57 L1017.17 701.57 L1019.10 701.57 L1021.03 701.57 L1022.96 701.57 L1024.89 701.57 L1026.82 701.57 L1028.75 701.57 L1030.68 701.57 L1032.61 701.57 L1034.54 701.57 L1036.47 701.57 L1038.40 701.57 L1040.33 701.57 L1042.26 701.57 L1044.19 701.57 L1046.12 701.57 L1048.05 701.57 L1049.98 701.57 L1051.91 701.57 L1053.84 701.57 L1055.77 701.57 L1057.70 701.57 L1059.63 701.57 L1061.56 701.57 L1063.49 701.57 L1065.42 701.57 L1067.35 701.57 L1069.28 701.57 L1071.21 701.57 L1073.14 701.57 L1075.07 701.57 L1077.00 701.57 L1078.93 683.11 L1080.86 701.57 L1082.79 701.57 L1084.72 701.57 L1086.65 701.57 L1088.58 701.57 L1090.51 701.57 L1092.44 701.57 L1094.37 701.57 L1096.30 701.57 L1098.23 701.57 L1100.16 701.57 L1102.09 701.57 L1104.02 701.57 L1105.95 701.57 L1107.88 701.57 L1109.81 701.57 L1111.74 701.57 L1113.67 701.57 L1115.60 701.57 L1117.53 701.57 L1119.46 701.57 L1121.39 701.57 L1123.32 701.57 L1125.25 701.57 L1127.18 701.57 L1129.11 701.57 L1131.04 701.57 L1132.97 701.57 L1134.90 701.57 L1136.83 701.57 L1138.76 701.57 L1140.69 701.57 L1142.62 701.57 L1144.55 701.57 L1146.48 701.57 L1148.41 701.57 L1150.34 676.72 L1152.27 701.57 L1155.00 701.57" fill="none" stroke="#6ED0E0" stroke-width="1.5" stroke-linejoin="round"/></g><clipPath id="c6"><rect x="1288" y="460" width="464" height="250"/></clipPath><g clip-path="url(#c6)"><path d="M1288.00 702.30 L1288.00 702.30 L1289.93 702.30 L1291.86 702.30 L1293.79 702.30 L1295.72 702.30 L1297.65 702.30 L1299.58 702.30 L1301.51 702.30 L1303.44 702.30 L1305.37 702.30 L1307.30 702.30 L1309.23 702.30 L1311.16 702.30 L1313.09 702.30 L1315.02 702.30 L1316.95 702.30 L1318.88 702.30 L1320.81 702.30 L1322.74 702.30 L1324.67 702.30 L1326.60 702.30 L1328.53 702.30 L1330.46 702.30 L1332.39 702.30 L1334.32 702.30 L1336.25 702.30 L1338.18 702.30 L1340.11 702.30 L1342.04 702.30 L1343.97 702.30 L1345.90 702.30 L1347.83 702.30 L1349.76 702.30 L1351.69 702.30 L1353.62 702.30 L1355.55 702.30 L1357.48 702.30 L1359.41 702.30 L1361.34 702.30 L1363.27 702.30 L1365.20 702.30 L1367.13 702.30 L1369.06 702.30 L1370.99 702.30 L1372.92 702.30 L1374.85 702.30 L1376.78 702.30 L1378.71 702.30 L1380.64 702.30 L1382.57 702.30 L1384.50 702.30 L1386.43 702.30 L1388.36 702.30 L1390.29 702.30 L1392.22 702.30 L1394.15 702.30 L1396.08 702.30 L1398.01 702.30 L1399.94 702.30 L1401.87 702.30 L1403.80 702.30 L1405.73 702.30 L1407.66 702.30 L1409.59 702.30 L1411.52 702.30 L1413.45 702.30 L1415.38 702.30 L1417.31 702.30 L1419.24 702.30 L1421.17 702.30 L1423.10 702.30 L1425.03 702.30 L1426.96 702.30 L1428.89 702.30 L1430.82 702.30 L1432.75 702.30 L1434.68 702.30 L1436.61 702.30 L1438.54 702.30 L1440.47 702.30 L1442.40 702.30 L1444.33 702.30 L1446.26 702.30 L1448.19 702.30 L1450.12 702.30 L1452.05 702.30 L1453.98 657.23 L1455.91 657.23 L1457.84 609.86 L1459.77 608.20 L1461.70 609.06 L1463.63 608.15 L1465.56 609.01 L1467.49 657.23 L1469.42 607.62 L1471.35 606.78 L1473.28 605.95 L1475.21 607.92 L1477.14 608.04 L1479.07 702.30 L1481.00 606.60 L1482.93 609.87 L1484.86 608.52 L1486.79 609.42 L1488.72 606.86 L1490.65 608.09 L1492.58 607.88 L1494.51 524.16 L1496.44 606.33 L1498.37 702.30 L1500.30 608.49 L1502.23 524.16 L1504.16 702.30 L1506.09 607.00 L1508.02 605.72 L1509.95 609.24 L1511.88 608.73 L1513.81 607.98 L1515.74 633.78 L1517.67 608.85 L1519.60 609.27 L1521.53 605.97 L1523.46 633.78 L1525.39 606.18 L1527.32 606.56 L1529.25 608.33 L1531.18 608.76 L1533.11 702.30 L1535.04 610.10 L1536.97 609.64 L1538.90 608.02 L1540.83 608.29 L1542.76 607.20 L1544.69 607.62 L1546.62 609.73 L1548.55 606.31 L1550.48 702.30 L1552.41 608.00 L1554.34 657.13 L1556.27 608.51 L1558.20 702.30 L1560.13 605.77 L1562.06 609.34 L1563.99 605.99 L1565.92 606.48 L1567.85 606.42 L1569.78 608.89 L1571.71 606.08 L1573.64 607.52 L1575.57 608.09 L1577.50 610.02 L1579.43 607.82 L1581.36 609.39 L1583.29 608.87 L1585.22 606.23 L1587.15 524.16 L1589.08 606.46 L1591.01 608.51 L1592.94 609.66 L1594.87 608.37 L1596.80 609.42 L1598.73 609.48 L1600.66 607.10 L1602.59 607.00 L1604.52 609.35 L1606.45 606.85 L1608.38 607.74 L1610.31 609.73 L1612.24 609.05 L1614.17 610.85 L1616.10 657.02 L1618.03 606.55 L1619.96 650.70 L1621.89 609.33 L1623.82 657.84 L1625.75 607.82 L1627.68 615.20 L1629.61 692.64 L1631.54 608.54 L1633.47 629.11 L1635.40 524.16 L1637.33 652.85 L1639.26 606.72 L1641.19 614.57 L1643.12 616.92 L1645.05 690.60 L1646.98 609.59 L1648.91 608.85 L1650.84 659.76 L1652.77 606.81 L1654.70 627.53 L1656.63 694.56 L1658.56 609.44 L1660.49 612.31 L1662.42 655.45 L1664.35 608.11 L1666.28 633.63 L1668.21 653.80 L1670.14 608.75 L1672.07 631.18 L1674.00 653.98 L1675.93 606.50 L1677.86 631.29 L1679.79 651.98 L1681.72 606.85 L1683.65 610.98 L1685.58 653.79 L1687.51 524.16 L1689.44 621.84 L1691.37 655.97 L1693.30 609.30 L1695.23 630.10 L1697.16 693.98 L1699.09 607.15 L1701.02 619.05 L1702.95 524.16 L1704.88 608.95 L1706.81 618.47 L1708.74 608.03 L1710.67 658.04 L1712.60 607.48 L1714.53 613.24 L1716.46 612.65 L1718.39 653.34 L1720.32 609.15 L1722.25 621.70 L1724.18 653.90 L1726.11 607.47 L1728.04 631.39 L1729.97 524.16 L1731.90 661.09 L1733.83 607.24 L1735.76 625.28 L1737.69 693.89 L1739.62 607.97 L1741.55 622.47 L1743.48 625.18 L1745.41 658.55 L1747.34 609.38 L1749.27 656.89 L1752.00 613.99 L1752.00 702.30Z" fill="#7EB26D" fill-opacity="0.1" stroke="none"/><path d="M1288.00 702.30 L1289.93 702.30 L1291.86 702.30 L1293.79 702.30 L1295.72 702.30 L1297.65 702.30 L1299.58 702.30 L1301.51 702.30 L1303.44 702.30 L1305.37 702.30 L1307.30 702.30 L1309.23 702.30 L1311.16 702.30 L1313.09 702.30 L1315.02 702.30 L1316.95 702.30 L1318.88 702.30 L1320.81 702.30 L1322.74 702.30 L1324.67 702.30 L1326.60 702.30 L1328.53 702.30 L1330.46 702.30 L1332.39 702.30 L1334.32 702.30 L1336.25 702.30 L1338.18 702.30 L1340.11 702.30 L1342.04 702.30 L1343.97 702.30 L1345.90 702.30 L1347.83 702.30 L1349.76 702.30 L1351.69 702.30 L1353.62 702.30 L1355.55 702.30 L1357.48 702.30 L1359.41 702.30 L1361.34 702.30 L1363.27 702.30 L1365.20 702.30 L1367.13 702.30 L1369.06 702.30 L1370.99 702.30 L1372.92 702.30 L1374.85 702.30 L1376.78 702.30 L1378.71 702.30 L1380.64 702.30 L1382.57 702.30 L1384.50 702.30 L1386.43 702.30 L1388.36 702.30 L1390.29 702.30 L1392.22 702.30 L1394.15 702.30 L1396.08 702.30 L1398.01 702.30 L1399.94 702.30 L1401.87 702.30 L1403.80 702.30 L1405.73 702.30 L1407.66 702.30 L1409.59 702.30 L1411.52 702.30 L1413.45 702.30 L1415.38 702.30 L1417.31 702.30 L1419.24 702.30 L1421.17 702.30 L1423.10 702.30 L1425.03 702.30 L1426.96 702.30 L1428.89 702.30 L1430.82 702.30 L1432.75 702.30 L1434.68 702.30 L1436.61 702.30 L1438.54 702.30 L1440.47 702.30 L1442.40 702.30 L1444.33 702.30 L1446.26 702.30 L1448.19 702.30 L1450.12 702.30 L1452.05 702.30 L1453.98 657.23 L1455.91 657.23 L1457.84 609.86 L1459.77 608.20 L1461.70 609.06 L1463.63 608.15 L1465.56 609.01 L1467.49 657.23 L1469.42 607.62 L1471.35 606.78 L1473.28 605.95 L1475.21 607.92 L1477.14 608.04 L1479.07 702.30 L1481.00 606.60 L1482.93 609.87 L1484.86 608.52 L1486.79 609.42 L1488.72 606.86 L1490.65 608.09 L1492.58 607.88 L1494.51 524.16 L1496.44 606.33 L1498.37 702.30 L1500.30 608.49 L1502.23 524.16 L1504.16 702.30 L1506.09 607.00 L1508.02 605.72 L1509.95 609.24 L1511.88 608.73 L1513.81 607.98 L1515.74 633.78 L1517.67 608.85 L1519.60 609.27 L1521.53 605.97 L1523.46 633.78 L1525.39 606.18 L1527.32 606.56 L1529.25 608.33 L1531.18 608.76 L1533.11 702.30 L1535.04 610.10 L1536.97 609.64 L1538.90 608.02 L1540.83 608.29 L1542.76 607.20 L1544.69 607.62 L1546.62 609.73 L1548.55 606.31 L1550.48 702.30 L1552.41 608.00 L1554.34 657.13 L1556.27 608.51 L1558.20 702.30 L1560.13 605.77 L1562.06 609.34 L1563.99 605.99 L1565.92 606.48 L1567.85 606.42 L1569.78 608.89 L1571.71 606.08 L1573.64 607.52 L1575.57 608.09 L1577.50 610.02 L1579.43 607.82 L1581.36 609.39 L1583.29 608.87 L1585.22 606.23 L1587.15 524.16 L1589.08 606.46 L1591.01 608.51 L1592.94 609.66 L1594.87 608.37 L1596.80 609.42 L1598.73 609.48 L1600.66 607.10 L1602.59 607.00 L1604.52 609.35 L1606.45 606.85 L1608.38 607.74 L1610.31 609.73 L1612.24 609.05 L1614.17 610.85 L1616.10 657.02 L1618.03 606.55 L1619.96 650.70 L1621.89 609.33 L1623.82 657.84 L1625.75 607.82 L1627.68 615.20 L1629.61 692.64 L1631.54 608.54 L1633.47 629.11 L1635.40 524.16 L1637.33 652.85 L1639.26 606.72 L1641.19 614.57 L1643.12 616.92 L1645.05 690.60 L1646.98 609.59 L1648.91 608.85 L1650.84 659.76 L1652.77 606.81 L1654.70 627.53 L1656.63 694.56 L1658.56 609.44 L1660.49 612.31 L1662.42 655.45 L1664.35 608.11 L1666.28 633.63 L1668.21 653.80 L1670.14 608.75 L1672.07 631.18 L1674.00 653.98 L1675.93 606.50 L1677.86 631.29 L1679.79 651.98 L1681.72 606.85 L1683.65 610.98 L1685.58 653.79 L1687.51 524.16 L1689.44 621.84 L1691.37 655.97 L1693.30 609.30 L1695.23 630.10 L1697.16 693.98 L1699.09 607.15 L1701.02 619.05 L1702.95 524.16 L1704.88 608.95 L1706.81 618.47 L1708.74 608.03 L1710.67 658.04 L1712.60 607.48 L1714.53 613.24 L1716.46 612.65 L1718.39 653.34 L1720.32 609.15 L1722.25 621.70 L1724.18 653.90 L1726.11 607.47 L1728.04 631.39 L1729.97 524.16 L1731.90 661.09 L1733.83 607.24 L1735.76 625.28 L1737.69 693.89 L1739.62 607.97 L1741.55 622.47 L1743.48 625.18 L1745.41 658.55 L1747.34 609.38 L1749.27 656.89 L1752.00 613.99" fill="none" stroke="#7EB26D" stroke-width="1.5" stroke-linejoin="round"/><path d="M1288.00 702.30 L1288.00 702.30 L1289.93 702.30 L1291.86 702.30 L1293.79 702.30 L1295.72 702.30 L1297.65 702.30 L1299.58 702.30 L1301.51 702.30 L1303.44 702.30 L1305.37 702.30 L1307.30 702.30 L1309.23 702.30 L1311.16 702.30 L1313.09 702.30 L1315.02 702.30 L1316.95 702.30 L1318.88 702.30 L1320.81 702.30 L1322.74 702.30 L1324.67 702.30 L1326.60 702.30 L1328.53 702.30 L1330.46 702.30 L1332.39 702.30 L1334.32 702.30 L1336.25 702.30 L1338.18 702.30 L1340.11 702.30 L1342.04 702.30 L1343.97 702.30 L1345.90 702.30 L1347.83 702.30 L1349.76 702.30 L1351.69 702.30 L1353.62 702.30 L1355.55 702.30 L1357.48 702.30 L1359.41 702.30 L1361.34 702.30 L1363.27 702.30 L1365.20 702.30 L1367.13 702.30 L1369.06 702.30 L1370.99 702.30 L1372.92 702.30 L1374.85 702.30 L1376.78 702.30 L1378.71 702.30 L1380.64 702.30 L1382.57 702.30 L1384.50 702.30 L1386.43 702.30 L1388.36 702.30 L1390.29 702.30 L1392.22 702.30 L1394.15 702.30 L1396.08 702.30 L1398.01 702.30 L1399.94 702.30 L1401.87 702.30 L1403.80 702.30 L1405.73 702.30 L1407.66 702.30 L1409.59 702.30 L1411.52 702.30 L1413.45 702.30 L1415.38 702.30 L1417.31 702.30 L1419.24 702.30 L1421.17 702.30 L1423.10 702.30 L1425.03 702.30 L1426.96 702.30 L1428.89 702.30 L1430.82 702.30 L1432.75 702.30 L1434.68 702.30 L1436.61 702.30 L1438.54 702.30 L1440.47 702.30 L1442.40 702.30 L1444.33 702.30 L1446.26 702.30 L1448.19 702.30 L1450.12 702.30 L1452.05 702.30 L1453.98 702.30 L1455.91 691.64 L1457.84 671.85 L1459.77 647.49 L1461.70 647.49 L1463.63 647.49 L1465.56 647.49 L1467.49 702.30 L1469.42 671.85 L1471.35 656.62 L1473.28 641.40 L1475.21 633.02 L1477.14 624.65 L1479.07 702.30 L1481.00 674.89 L1482.93 647.49 L1484.86 645.96 L1486.79 644.44 L1488.72 664.23 L1490.65 644.44 L1492.58 624.65 L1494.51 650.53 L1496.44 676.42 L1498.37 702.30 L1500.30 659.67 L1502.23 617.03 L1504.16 702.30 L1506.09 679.97 L1508.02 657.64 L1509.95 635.31 L1511.88 652.05 L1513.81 643.68 L1515.74 635.31 L1517.67 671.85 L1519.60 648.25 L1521.53 624.65 L1523.46 638.35 L1525.39 636.07 L1527.32 633.78 L1529.25 620.08 L1531.18 661.19 L1533.11 702.30 L1535.04 635.31 L1536.97 641.40 L1538.90 647.49 L1540.83 652.05 L1542.76 656.62 L1544.69 668.80 L1546.62 676.42 L1548.55 684.03 L1550.48 702.30 L1552.41 682.00 L1554.34 661.70 L1556.27 641.40 L1558.20 702.30 L1560.13 624.65 L1562.06 633.37 L1563.99 654.65 L1565.92 678.74 L1567.85 629.24 L1569.78 646.29 L1571.71 632.98 L1573.64 669.67 L1575.57 625.22 L1577.50 640.59 L1579.43 626.01 L1581.36 664.37 L1583.29 634.99 L1585.22 626.13 L1587.15 635.99 L1589.08 674.76 L1591.01 630.98 L1592.94 634.86 L1594.87 639.95 L1596.80 666.71 L1598.73 640.82 L1600.66 628.35 L1602.59 702.30 L1604.52 662.46 L1606.45 643.97 L1608.38 631.31 L1610.31 658.48 L1612.24 646.96 L1614.17 669.69 L1616.10 695.07 L1618.03 630.29 L1619.96 699.66 L1621.89 655.44 L1623.82 696.70 L1625.75 633.50 L1627.68 648.38 L1629.61 697.21 L1631.54 648.15 L1633.47 648.09 L1635.40 671.56 L1637.33 694.27 L1639.26 633.66 L1641.19 673.53 L1643.12 647.54 L1645.05 695.17 L1646.98 645.28 L1648.91 671.93 L1650.84 696.22 L1652.77 627.75 L1654.70 665.75 L1656.63 699.12 L1658.56 630.00 L1660.49 662.84 L1662.42 699.47 L1664.35 638.02 L1666.28 671.44 L1668.21 695.15 L1670.14 641.81 L1672.07 662.15 L1674.00 702.15 L1675.93 655.68 L1677.86 664.83 L1679.79 702.18 L1681.72 653.71 L1683.65 679.36 L1685.58 701.88 L1687.51 637.68 L1689.44 653.82 L1691.37 698.79 L1693.30 654.78 L1695.23 661.68 L1697.16 698.55 L1699.09 633.00 L1701.02 656.53 L1702.95 698.50 L1704.88 655.94 L1706.81 658.36 L1708.74 672.12 L1710.67 697.64 L1712.60 627.39 L1714.53 651.37 L1716.46 667.37 L1718.39 693.63 L1720.32 642.71 L1722.25 672.73 L1724.18 696.92 L1726.11 651.16 L1728.04 664.86 L1729.97 657.75 L1731.90 696.24 L1733.83 642.29 L1735.76 658.56 L1737.69 698.46 L1739.62 636.64 L1741.55 641.97 L1743.48 677.72 L1745.41 693.68 L1747.34 620.08 L1749.27 698.39 L1752.00 659.67 L1752.00 702.30Z" fill="#EAB839" fill-opacity="0.1" stroke="none"/><path d="M1288.00 702.30 L1289.93 702.30 L1291.86 702.30 L1293.79 702.30 L1295.72 702.30 L1297.65 702.30 L1299.58 702.30 L1301.51 702.30 L1303.44 702.30 L1305.37 702.30 L1307.30 702.30 L1309.23 702.30 L1311.16 702.30 L1313.09 702.30 L1315.02 702.30 L1316.95 702.30 L1318.88 702.30 L1320.81 702.30 L1322.74 702.30 L1324.67 702.30 L1326.60 702.30 L1328.53 702.30 L1330.46 702.30 L1332.39 702.30 L1334.32 702.30 L1336.25 702.30 L1338.18 702.30 L1340.11 702.30 L1342.04 702.30 L1343.97 702.30 L1345.90 702.30 L1347.83 702.30 L1349.76 702.30 L1351.69 702.30 L1353.62 702.30 L1355.55 702.30 L1357.48 702.30 L1359.41 702.30 L1361.34 702.30 L1363.27 702.30 L1365.20 702.30 L1367.13 702.30 L1369.06 702.30 L1370.99 702.30 L1372.92 702.30 L1374.85 702.30 L1376.78 702.30 L1378.71 702.30 L1380.64 702.30 L1382.57 702.30 L1384.50 702.30 L1386.43 702.30 L1388.36 702.30 L1390.29 702.30 L1392.22 702.30 L1394.15 702.30 L1396.08 702.30 L1398.01 702.30 L1399.94 702.30 L1401.87 702.30 L1403.80 702.30 L1405.73 702.30 L1407.66 702.30 L1409.59 702.30 L1411.52 702.30 L1413.45 702.30 L1415.38 702.30 L1417.31 702.30 L1419.24 702.30 L1421.17 702.30 L1423.10 702.30 L1425.03 702.30 L1426.96 702.30 L1428.89 702.30 L1430.82 702.30 L1432.75 702.30 L1434.68 702.30 L1436.61 702.30 L1438.54 702.30 L1440.47 702.30 L1442.40 702.30 L1444.33 702.30 L1446.26 702.30 L1448.19 702.30 L1450.12 702.30 L1452.05 702.30 L1453.98 702.30 L1455.91 691.64 L1457.84 671.85 L1459.77 647.49 L1461.70 647.49 L1463.63 647.49 L1465.56 647.49 L1467.49 702.30 L1469.42 671.85 L1471.35 656.62 L1473.28 641.40 L1475.21 633.02 L1477.14 624.65 L1479.07 702.30 L1481.00 674.89 L1482.93 647.49 L1484.86 645.96 L1486.79 644.44 L1488.72 664.23 L1490.65 644.44 L1492.58 624.65 L1494.51 650.53 L1496.44 676.42 L1498.37 702.30 L1500.30 659.67 L1502.23 617.03 L1504.16 702.30 L1506.09 679.97 L1508.02 657.64 L1509.95 635.31 L1511.88 652.05 L1513.81 643.68 L1515.74 635.31 L1517.67 671.85 L1519.60 648.25 L1521.53 624.65 L1523.46 638.35 L1525.39 636.07 L1527.32 633.78 L1529.25 620.08 L1531.18 661.19 L1533.11 702.30 L1535.04 635.31 L1536.97 641.40 L1538.90 647.49 L1540.83 652.05 L1542.76 656.62 L1544.69 668.80 L1546.62 676.42 L1548.55 684.03 L1550.48 702.30 L1552.41 682.00 L1554.34 661.70 L1556.27 641.40 L1558.20 702.30 L1560.13 624.65 L1562.06 633.37 L1563.99 654.65 L1565.92 678.74 L1567.85 629.24 L1569.78 646.29 L1571.71 632.98 L1573.64 669.67 L1575.57 625.22 L1577.50 640.59 L1579.43 626.01 L1581.36 664.37 L1583.29 634.99 L1585.22 626.13 L1587.15 635.99 L1589.08 674.76 L1591.01 630.98 L1592.94 634.86 L1594.87 639.95 L1596.80 666.71 L1598.73 640.82 L1600.66 628.35 L1602.59 702.30 L1604.52 662.46 L1606.45 643.97 L1608.38 631.31 L1610.31 658.48 L1612.24 646.96 L1614.17 669.69 L1616.10 695.07 L1618.03 630.29 L1619.96 699.66 L1621.89 655.44 L1623.82 696.70 L1625.75 633.50 L1627.68 648.38 L1629.61 697.21 L1631.54 648.15 L1633.47 648.09 L1635.40 671.56 L1637.33 694.27 L1639.26 633.66 L1641.19 673.53 L1643.12 647.54 L1645.05 695.17 L1646.98 645.28 L1648.91 671.93 L1650.84 696.22 L1652.77 627.75 L1654.70 665.75 L1656.63 699.12 L1658.56 630.00 L1660.49 662.84 L1662.42 699.47 L1664.35 638.02 L1666.28 671.44 L1668.21 695.15 L1670.14 641.81 L1672.07 662.15 L1674.00 702.15 L1675.93 655.68 L1677.86 664.83 L1679.79 702.18 L1681.72 653.71 L1683.65 679.36 L1685.58 701.88 L1687.51 637.68 L1689.44 653.82 L1691.37 698.79 L1693.30 654.78 L1695.23 661.68 L1697.16 698.55 L1699.09 633.00 L1701.02 656.53 L1702.95 698.50 L1704.88 655.94 L1706.81 658.36 L1708.74 672.12 L1710.67 697.64 L1712.60 627.39 L1714.53 651.37 L1716.46 667.37 L1718.39 693.63 L1720.32 642.71 L1722.25 672.73 L1724.18 696.92 L1726.11 651.16 L1728.04 664.86 L1729.97 657.75 L1731.90 696.24 L1733.83 642.29 L1735.76 658.56 L1737.69 698.46 L1739.62 636.64 L1741.55 641.97 L1743.48 677.72 L1745.41 693.68 L1747.34 620.08 L1749.27 698.39 L1752.00 659.67" fill="none" stroke="#EAB839" stroke-width="1.5" stroke-linejoin="round"/><path d="M1288.00 702.30 L1288.00 701.39 L1289.93 701.39 L1291.86 701.39 L1293.79 701.39 L1295.72 701.39 L1297.65 701.39 L1299.58 701.39 L1301.51 701.39 L1303.44 701.39 L1305.37 701.39 L1307.30 701.39 L1309.23 701.39 L1311.16 701.39 L1313.09 701.39 L1315.02 701.39 L1316.95 701.39 L1318.88 701.39 L1320.81 701.39 L1322.74 701.39 L1324.67 701.39 L1326.60 701.39 L1328.53 701.39 L1330.46 701.39 L1332.39 701.39 L1334.32 701.39 L1336.25 701.39 L1338.18 701.39 L1340.11 701.39 L1342.04 701.39 L1343.97 701.39 L1345.90 701.39 L1347.83 701.39 L1349.76 701.39 L1351.69 701.39 L1353.62 701.39 L1355.55 701.39 L1357.48 701.39 L1359.41 701.39 L1361.34 701.39 L1363.27 701.39 L1365.20 701.39 L1367.13 701.39 L1369.06 701.39 L1370.99 701.39 L1372.92 701.39 L1374.85 701.39 L1376.78 701.39 L1378.71 701.39 L1380.64 701.39 L1382.57 701.39 L1384.50 701.39 L1386.43 701.39 L1388.36 701.39 L1390.29 701.39 L1392.22 701.39 L1394.15 701.39 L1396.08 701.39 L1398.01 701.39 L1399.94 701.39 L1401.87 701.39 L1403.80 701.39 L1405.73 701.39 L1407.66 701.39 L1409.59 701.39 L1411.52 701.39 L1413.45 701.39 L1415.38 701.39 L1417.31 701.39 L1419.24 701.39 L1421.17 701.39 L1423.10 701.39 L1425.03 701.39 L1426.96 701.39 L1428.89 701.39 L1430.82 701.39 L1432.75 701.39 L1434.68 701.39 L1436.61 701.39 L1438.54 701.39 L1440.47 701.39 L1442.40 701.39 L1444.33 701.39 L1446.26 701.39 L1448.19 701.39 L1450.12 701.39 L1452.05 701.39 L1453.98 701.39 L1455.91 701.39 L1457.84 701.39 L1459.77 701.39 L1461.70 701.39 L1463.63 701.39 L1465.56 701.39 L1467.49 701.39 L1469.42 701.39 L1471.35 701.39 L1473.28 701.39 L1475.21 701.39 L1477.14 701.39 L1479.07 701.39 L1481.00 701.39 L1482.93 701.39 L1484.86 701.39 L1486.79 701.39 L1488.72 701.39 L1490.65 701.39 L1492.58 701.39 L1494.51 701.39 L1496.44 701.39 L1498.37 701.39 L1500.30 701.39 L1502.23 701.39 L1504.16 701.39 L1506.09 701.39 L1508.02 701.39 L1509.95 701.39 L1511.88 701.39 L1513.81 701.39 L1515.74 701.39 L1517.67 701.39 L1519.60 701.39 L1521.53 701.39 L1523.46 701.39 L1525.39 701.39 L1527.32 701.39 L1529.25 701.39 L1531.18 701.39 L1533.11 701.39 L1535.04 701.39 L1536.97 701.39 L1538.90 701.39 L1540.83 701.39 L1542.76 701.39 L1544.69 701.39 L1546.62 701.39 L1548.55 701.39 L1550.48 701.39 L1552.41 701.39 L1554.34 701.39 L1556.27 701.39 L1558.20 701.39 L1560.13 701.39 L1562.06 701.39 L1563.99 701.39 L1565.92 701.39 L1567.85 701.39 L1569.78 701.39 L1571.71 701.39 L1573.64 701.39 L1575.57 701.39 L1577.50 701.39 L1579.43 701.39 L1581.36 701.39 L1583.29 701.39 L1585.22 701.39 L1587.15 701.39 L1589.08 701.39 L1591.01 701.39 L1592.94 701.39 L1594.87 701.39 L1596.80 701.39 L1598.73 701.39 L1600.66 701.39 L1602.59 701.39 L1604.52 701.39 L1606.45 701.39 L1608.38 701.39 L1610.31 701.39 L1612.24 701.39 L1614.17 701.39 L1616.10 701.39 L1618.03 701.39 L1619.96 701.39 L1621.89 701.39 L1623.82 701.39 L1625.75 701.39 L1627.68 701.39 L1629.61 701.39 L1631.54 701.39 L1633.47 701.39 L1635.40 701.39 L1637.33 701.39 L1639.26 701.39 L1641.19 701.39 L1643.12 701.39 L1645.05 701.39 L1646.98 701.39 L1648.91 701.39 L1650.84 701.39 L1652.77 701.39 L1654.70 701.39 L1656.63 701.39 L1658.56 701.39 L1660.49 701.39 L1662.42 701.39 L1664.35 701.39 L1666.28 701.39 L1668.21 701.39 L1670.14 701.39 L1672.07 701.39 L1674.00 701.39 L1675.93 701.39 L1677.86 701.39 L1679.79 701.39 L1681.72 701.39 L1683.65 701.39 L1685.58 701.39 L1687.51 701.39 L1689.44 701.39 L1691.37 701.39 L1693.30 701.39 L1695.23 701.39 L1697.16 701.39 L1699.09 701.39 L1701.02 701.39 L1702.95 701.39 L1704.88 701.39 L1706.81 701.39 L1708.74 701.39 L1710.67 701.39 L1712.60 701.39 L1714.53 701.39 L1716.46 701.39 L1718.39 701.39 L1720.32 701.39 L1722.25 701.39 L1724.18 701.39 L1726.11 701.39 L1728.04 701.39 L1729.97 701.39 L1731.90 701.39 L1733.83 701.39 L1735.76 701.39 L1737.69 701.39 L1739.62 701.39 L1741.55 701.39 L1743.48 701.39 L1745.41 701.39 L1747.34 701.39 L1749.27 701.39 L1752.00 701.39 L1752.00 702.30Z" fill="#6ED0E0" fill-opacity="0.1" stroke="none"/><path d="M1288.00 701.39 L1289.93 701.39 L1291.86 701.39 L1293.79 701.39 L1295.72 701.39 L1297.65 701.39 L1299.58 701.39 L1301.51 701.39 L1303.44 701.39 L1305.37 701.39 L1307.30 701.39 L1309.23 701.39 L1311.16 701.39 L1313.09 701.39 L1315.02 701.39 L1316.95 701.39 L1318.88 701.39 L1320.81 701.39 L1322.74 701.39 L1324.67 701.39 L1326.60 701.39 L1328.53 701.39 L1330.46 701.39 L1332.39 701.39 L1334.32 701.39 L1336.25 701.39 L1338.18 701.39 L1340.11 701.39 L1342.04 701.39 L1343.97 701.39 L1345.90 701.39 L1347.83 701.39 L1349.76 701.39 L1351.69 701.39 L1353.62 701.39 L1355.55 701.39 L1357.48 701.39 L1359.41 701.39 L1361.34 701.39 L1363.27 701.39 L1365.20 701.39 L1367.13 701.39 L1369.06 701.39 L1370.99 701.39 L1372.92 701.39 L1374.85 701.39 L1376.78 701.39 L1378.71 701.39 L1380.64 701.39 L1382.57 701.39 L1384.50 701.39 L1386.43 701.39 L1388.36 701.39 L1390.29 701.39 L1392.22 701.39 L1394.15 701.39 L1396.08 701.39 L1398.01 701.39 L1399.94 701.39 L1401.87 701.39 L1403.80 701.39 L1405.73 701.39 L1407.66 701.39 L1409.59 701.39 L1411.52 701.39 L1413.45 701.39 L1415.38 701.39 L1417.31 701.39 L1419.24 701.39 L1421.17 701.39 L1423.10 701.39 L1425.03 701.39 L1426.96 701.39 L1428.89 701.39 L1430.82 701.39 L1432.75 701.39 L1434.68 701.39 L1436.61 701.39 L1438.54 701.39 L1440.47 701.39 L1442.40 701.39 L1444.33 701.39 L1446.26 701.39 L1448.19 701.39 L1450.12 701.39 L1452.05 701.39 L1453.98 701.39 L1455.91 701.39 L1457.84 701.39 L1459.77 701.39 L1461.70 701.39 L1463.63 701.39 L1465.56 701.39 L1467.49 701.39 L1469.42 701.39 L1471.35 701.39 L1473.28 701.39 L1475.21 701.39 L1477.14 701.39 L1479.07 701.39 L1481.00 701.39 L1482.93 701.39 L1484.86 701.39 L1486.79 701.39 L1488.72 701.39 L1490.65 701.39 L1492.58 701.39 L1494.51 701.39 L1496.44 701.39 L1498.37 701.39 L1500.30 701.39 L1502.23 701.39 L1504.16 701.39 L1506.09 701.39 L1508.02 701.39 L1509.95 701.39 L1511.88 701.39 L1513.81 701.39 L1515.74 701.39 L1517.67 701.39 L1519.60 701.39 L1521.53 701.39 L1523.46 701.39 L1525.39 701.39 L1527.32 701.39 L1529.25 701.39 L1531.18 701.39 L1533.11 701.39 L1535.04 701.39 L1536.97 701.39 L1538.90 701.39 L1540.83 701.39 L1542.76 701.39 L1544.69 701.39 L1546.62 701.39 L1548.55 701.39 L1550.48 701.39 L1552.41 701.39 L1554.34 701.39 L1556.27 701.39 L1558.20 701.39 L1560.13 701.39 L1562.06 701.39 L1563.99 701.39 L1565.92 701.39 L1567.85 701.39 L1569.78 701.39 L1571.71 701.39 L1573.64 701.39 L1575.57 701.39 L1577.50 701.39 L1579.43 701.39 L1581.36 701.39 L1583.29 701.39 L1585.22 701.39 L1587.15 701.39 L1589.08 701.39 L1591.01 701.39 L1592.94 701.39 L1594.87 701.39 L1596.80 701.39 L1598.73 701.39 L1600.66 701.39 L1602.59 701.39 L1604.52 701.39 L1606.45 701.39 L1608.38 701.39 L1610.31 701.39 L1612.24 701.39 L1614.17 701.39 L1616.10 701.39 L1618.03 701.39 L1619.96 701.39 L1621.89 701.39 L1623.82 701.39 L1625.75 701.39 L1627.68 701.39 L1629.61 701.39 L1631.54 701.39 L1633.47 701.39 L1635.40 701.39 L1637.33 701.39 L1639.26 701.39 L1641.19 701.39 L1643.12 701.39 L1645.05 701.39 L1646.98 701.39 L1648.91 701.39 L1650.84 701.39 L1652.77 701.39 L1654.70 701.39 L1656.63 701.39 L1658.56 701.39 L1660.49 701.39 L1662.42 701.39 L1664.35 701.39 L1666.28 701.39 L1668.21 701.39 L1670.14 701.39 L1672.07 701.39 L1674.00 701.39 L1675.93 701.39 L1677.86 701.39 L1679.79 701.39 L1681.72 701.39 L1683.65 701.39 L1685.58 701.39 L1687.51 701.39 L1689.44 701.39 L1691.37 701.39 L1693.30 701.39 L1695.23 701.39 L1697.16 701.39 L1699.09 701.39 L1701.02 701.39 L1702.95 701.39 L1704.88 701.39 L1706.81 701.39 L1708.74 701.39 L1710.67 701.39 L1712.60 701.39 L1714.53 701.39 L1716.46 701.39 L1718.39 701.39 L1720.32 701.39 L1722.25 701.39 L1724.18 701.39 L1726.11 701.39 L1728.04 701.39 L1729.97 701.39 L1731.90 701.39 L1733.83 701.39 L1735.76 701.39 L1737.69 701.39 L1739.62 701.39 L1741.55 701.39 L1743.48 701.39 L1745.41 701.39 L1747.34 701.39 L1749.27 701.39 L1752.00 701.39" fill="none" stroke="#6ED0E0" stroke-width="1.5" stroke-linejoin="round"/></g><line x1="241.8" y1="74.6" x2="241.8" y2="339.6" stroke="#8c0909" stroke-width="1.5"/><line x1="1042" y1="74.6" x2="1042" y2="338.6" stroke="#8c0909" stroke-width="1.5"/><line x1="1438.5" y1="74.6" x2="1438.5" y2="338.6" stroke="#8c0909" stroke-width="1.5"/><line x1="533.8" y1="473.9" x2="533.8" y2="702.3" stroke="#8c0909" stroke-width="1.5"/><line x1="1133.7" y1="473.9" x2="1133.7" y2="702.3" stroke="#8c0909" stroke-width="1.5"/><line x1="1730.6" y1="473.9" x2="1730.6" y2="702.3" stroke="#8c0909" stroke-width="1.5"/></svg>
<div class="layer"><div class="t" style="left:301.5px;transform:translateX(-50%);top:16px;font-size:19.5px;font-weight:700;color:#ccccdc;-webkit-text-stroke:0;">PD Client CMD OPS</div><div class="t" style="left:900px;transform:translateX(-50%);top:16px;font-size:19.5px;font-weight:700;color:#ccccdc;-webkit-text-stroke:0;">PD Client CMD Duration</div><div class="t" style="left:1497px;transform:translateX(-50%);top:16px;font-size:19.5px;font-weight:700;color:#ccccdc;-webkit-text-stroke:0;">PD Client CMD Fail OPS</div><div class="t" style="left:301.5px;transform:translateX(-50%);top:414px;font-size:19.5px;font-weight:700;color:#ccccdc;-webkit-text-stroke:0;">PD TSO OPS</div><div class="t" style="left:900px;transform:translateX(-50%);top:414px;font-size:19.5px;font-weight:700;color:#ccccdc;-webkit-text-stroke:0;">PD TSO Wait Duration</div><div class="t" style="left:1497px;transform:translateX(-50%);top:414px;font-size:19.5px;font-weight:700;color:#ccccdc;-webkit-text-stroke:0;">PD TSO RPC Duration</div><div class="t" style="right:1771.5px;top:64.6px;font-size:18px;font-weight:400;color:#ccccdc;letter-spacing:0.5px;">5</div><div class="t" style="right:1771.5px;top:117.6px;font-size:18px;font-weight:400;color:#ccccdc;letter-spacing:0.5px;">4</div><div class="t" style="right:1771.5px;top:170.6px;font-size:18px;font-weight:400;color:#ccccdc;letter-spacing:0.5px;">3</div><div class="t" style="right:1771.5px;top:223.6px;font-size:18px;font-weight:400;color:#ccccdc;letter-spacing:0.5px;">2</div><div class="t" style="right:1771.5px;top:276.6px;font-size:18px;font-weight:400;color:#ccccdc;letter-spacing:0.5px;">1</div><div class="t" style="right:1771.5px;top:331.1px;font-size:18px;font-weight:400;color:#ccccdc;letter-spacing:0.5px;">0</div><div class="t" style="left:59.800000000000004px;transform:translateX(-50%);top:352px;font-size:18px;font-weight:400;color:#ccccdc;letter-spacing:1.2px;">01/16</div><div class="t" style="left:224.29999999999998px;transform:translateX(-50%);top:352px;font-size:18px;font-weight:400;color:#ccccdc;letter-spacing:1.2px;">02/01</div><div class="t" style="right:1122.5px;top:64.6px;font-size:18px;font-weight:400;color:#ccccdc;letter-spacing:0.5px;">200 ms</div><div class="t" style="right:1122.5px;top:130.6px;font-size:18px;font-weight:400;color:#ccccdc;letter-spacing:0.5px;">150 ms</div><div class="t" style="right:1122.5px;top:196.6px;font-size:18px;font-weight:400;color:#ccccdc;letter-spacing:0.5px;">100 ms</div><div class="t" style="right:1122.5px;top:262.6px;font-size:18px;font-weight:400;color:#ccccdc;letter-spacing:0.5px;">50 ms</div><div class="t" style="right:1122.5px;top:330.1px;font-size:18px;font-weight:400;color:#ccccdc;letter-spacing:0.5px;">0 s</div><div class="t" style="left:715.9px;transform:translateX(-50%);top:352px;font-size:18px;font-weight:400;color:#ccccdc;letter-spacing:1.2px;">01/16</div><div class="t" style="left:862.9px;transform:translateX(-50%);top:352px;font-size:18px;font-weight:400;color:#ccccdc;letter-spacing:1.2px;">01/24</div><div class="t" style="left:1009.9px;transform:translateX(-50%);top:352px;font-size:18px;font-weight:400;color:#ccccdc;letter-spacing:1.2px;">02/01</div><div class="t" style="right:540.5px;top:64.6px;font-size:18px;font-weight:400;color:#ccccdc;letter-spacing:0.5px;">1</div><div class="t" style="right:540.5px;top:130.6px;font-size:18px;font-weight:400;color:#ccccdc;letter-spacing:0.5px;">0.750</div><div class="t" style="right:540.5px;top:196.6px;font-size:18px;font-weight:400;color:#ccccdc;letter-spacing:0.5px;">0.500</div><div class="t" style="right:540.5px;top:262.6px;font-size:18px;font-weight:400;color:#ccccdc;letter-spacing:0.5px;">0.250</div><div class="t" style="right:540.5px;top:330.1px;font-size:18px;font-weight:400;color:#ccccdc;letter-spacing:0.5px;">0</div><div class="t" style="left:1284.3999999999999px;transform:translateX(-50%);top:352px;font-size:18px;font-weight:400;color:#ccccdc;letter-spacing:1.2px;">01/16</div><div class="t" style="left:1423.6px;transform:translateX(-50%);top:352px;font-size:18px;font-weight:400;color:#ccccdc;letter-spacing:1.2px;">02/01</div><div class="t" style="right:1771.5px;top:463.9px;font-size:18px;font-weight:400;color:#ccccdc;letter-spacing:0.5px;">5</div><div class="t" style="right:1771.5px;top:509.5799999999999px;font-size:18px;font-weight:400;color:#ccccdc;letter-spacing:0.5px;">4</div><div class="t" style="right:1771.5px;top:555.26px;font-size:18px;font-weight:400;color:#ccccdc;letter-spacing:0.5px;">3</div><div class="t" style="right:1771.5px;top:600.9399999999999px;font-size:18px;font-weight:400;color:#ccccdc;letter-spacing:0.5px;">2</div><div class="t" style="right:1771.5px;top:646.62px;font-size:18px;font-weight:400;color:#ccccdc;letter-spacing:0.5px;">1</div><div class="t" style="right:1771.5px;top:693.8px;font-size:18px;font-weight:400;color:#ccccdc;letter-spacing:0.5px;">0</div><div class="t" style="left:80.8px;transform:translateX(-50%);top:715px;font-size:18px;font-weight:400;color:#ccccdc;letter-spacing:1.2px;">01/16</div><div class="t" style="left:285.0px;transform:translateX(-50%);top:715px;font-size:18px;font-weight:400;color:#ccccdc;letter-spacing:1.2px;">01/24</div><div class="t" style="left:488.40000000000003px;transform:translateX(-50%);top:715px;font-size:18px;font-weight:400;color:#ccccdc;letter-spacing:1.2px;">02/01</div><div class="t" style="right:1122.5px;top:463.9px;font-size:18px;font-weight:400;color:#ccccdc;letter-spacing:0.5px;">250 ms</div><div class="t" style="right:1122.5px;top:509.5799999999999px;font-size:18px;font-weight:400;color:#ccccdc;letter-spacing:0.5px;">200 ms</div><div class="t" style="right:1122.5px;top:555.26px;font-size:18px;font-weight:400;color:#ccccdc;letter-spacing:0.5px;">150 ms</div><div class="t" style="right:1122.5px;top:600.9399999999999px;font-size:18px;font-weight:400;color:#ccccdc;letter-spacing:0.5px;">100 ms</div><div class="t" style="right:1122.5px;top:646.62px;font-size:18px;font-weight:400;color:#ccccdc;letter-spacing:0.5px;">50 ms</div><div class="t" style="right:1122.5px;top:693.8px;font-size:18px;font-weight:400;color:#ccccdc;letter-spacing:0.5px;">0 s</div><div class="t" style="left:721.8000000000001px;transform:translateX(-50%);top:715px;font-size:18px;font-weight:400;color:#ccccdc;letter-spacing:1.2px;">01/16</div><div class="t" style="left:907.7px;transform:translateX(-50%);top:715px;font-size:18px;font-weight:400;color:#ccccdc;letter-spacing:1.2px;">01/24</div><div class="t" style="left:1093.6px;transform:translateX(-50%);top:715px;font-size:18px;font-weight:400;color:#ccccdc;letter-spacing:1.2px;">02/01</div><div class="t" style="right:525.5px;top:463.9px;font-size:18px;font-weight:400;color:#ccccdc;letter-spacing:0.5px;">150 ms</div><div class="t" style="right:525.5px;top:540.03px;font-size:18px;font-weight:400;color:#ccccdc;letter-spacing:0.5px;">100 ms</div><div class="t" style="right:525.5px;top:616.16px;font-size:18px;font-weight:400;color:#ccccdc;letter-spacing:0.5px;">50 ms</div><div class="t" style="right:525.5px;top:693.79px;font-size:18px;font-weight:400;color:#ccccdc;letter-spacing:0.5px;">0 s</div><div class="t" style="left:1319.1999999999998px;transform:translateX(-50%);top:715px;font-size:18px;font-weight:400;color:#ccccdc;letter-spacing:1.2px;">01/16</div><div class="t" style="left:1504.3999999999999px;transform:translateX(-50%);top:715px;font-size:18px;font-weight:400;color:#ccccdc;letter-spacing:1.2px;">01/24</div><div class="t" style="left:1690.6px;transform:translateX(-50%);top:715px;font-size:18px;font-weight:400;color:#ccccdc;letter-spacing:1.2px;">02/01</div><div class="leg" style="left:283px;top:70px;width:291px;height:304px"><div class="lr" style="top:-14px;background:#22252b;"><i style="background:#EF843C"></i><span>get_prev_region</span></div><div class="lr" style="top:25px;"><i style="background:#E24D42"></i><span>get_region</span></div><div class="lr" style="top:64px;background:#22252b;"><i style="background:#1F78C1"></i><span>get_region_byid</span></div><div class="lr" style="top:103px;"><i style="background:#BA43A9"></i><span>get_store</span></div><div class="lr" style="top:142px;background:#22252b;"><i style="background:#705DA0"></i><span>scan_regions</span></div><div class="lr" style="top:181px;"><i style="background:#508642"></i><span>scatter_region</span></div><div class="lr" style="top:220px;background:#22252b;"><i style="background:#CCA300"></i><span>scatter_regions</span></div><div class="lr" style="top:259px;"><i style="background:#447EBC"></i><span>split_regions</span></div><div class="lr" style="top:298px;background:#22252b;"><i style="background:#C15C17"></i><span>tso</span></div></div><div class="sb" style="left:570px;top:140px;height:156px"></div><div class="leg" style="left:1479px;top:72px;width:291px;height:302px"><div class="lr" style="top:0px;"><i style="background:#7EB26D"></i><span>get_all_stores</span></div><div class="lr" style="top:39px;background:#22252b;"><i style="background:#EAB839"></i><span>get_member_info</span></div><div class="lr" style="top:78px;"><i style="background:#6ED0E0"></i><span>get_prev_region</span></div><div class="lr" style="top:117px;background:#22252b;"><i style="background:#EF843C"></i><span>get_region</span></div><div class="lr" style="top:156px;"><i style="background:#E24D42"></i><span>get_region_byid</span></div><div class="lr" style="top:195px;background:#22252b;"><i style="background:#1F78C1"></i><span>get_store</span></div><div class="lr" style="top:234px;"><i style="background:#BA43A9"></i><span>scan_regions</span></div><div class="lr" style="top:273px;background:#22252b;"><i style="background:#705DA0"></i><span>tso</span></div></div><div class="sb" style="left:1765px;top:73px;height:233px"></div><div class="lr" style="left:1091px;width:82px;top:72px;"><i style="background:#7EB26D"></i><span>999-</span></div><div class="lr" style="left:1091px;width:82px;top:111px;background:#22252b;"><i style="background:#EAB839"></i><span>99-</span></div><div class="lr" style="left:1091px;width:82px;top:150px;"><i style="background:#6ED0E0"></i><span>90-</span></div><div class="t" style="left:69px;top:750px;font-size:18px;font-weight:400;color:#ccccdc;">cmd</div><div class="t" style="left:153px;top:750px;font-size:18px;font-weight:400;color:#ccccdc;">request</div><div class="t" style="left:668px;top:750px;font-size:18px;font-weight:400;color:#ccccdc;">999</div><div class="t" style="left:747px;top:750px;font-size:18px;font-weight:400;color:#ccccdc;">99</div><div class="t" style="left:816px;top:750px;font-size:18px;font-weight:400;color:#ccccdc;">90</div><div class="t" style="left:1265px;top:750px;font-size:18px;font-weight:400;color:#ccccdc;">999</div><div class="t" style="left:1344px;top:750px;font-size:18px;font-weight:400;color:#ccccdc;">99</div><div class="t" style="left:1413px;top:750px;font-size:18px;font-weight:400;color:#ccccdc;">90</div>
<div class="tip" style="left:1057px;top:261px;width:209px;height:138px">
<div class="t" style="left:17px;top:13px;font-size:18px;font-weight:700;-webkit-text-stroke:0;letter-spacing:0.28px">2023-02-02 18:00:00</div>
<div class="tr" style="top:42px;color:#fff;font-weight:700;-webkit-text-stroke:0"><i style="background:#7EB26D"></i><span class="k">999-:</span><span class="v">79.2 ms</span></div>
<div class="tr" style="top:69px"><i style="background:#EAB839"></i><span class="k">99-:</span><span class="v">54.5 ms</span></div>
<div class="tr" style="top:96px"><i style="background:#6ED0E0"></i><span class="k">90-:</span><span class="v">541 µs</span></div>
</div></div>
<div class="bot"></div>
<div style="position:absolute;left:343px;top:787px;width:48px;height:5px;background:#4a5e66"></div>
<div style="position:absolute;left:393px;top:787px;width:5px;height:5px;background:#3a4a50"></div>
<div style="position:absolute;left:1802px;top:178px;width:3px;height:230px;background:#2c2e33;border-radius:3px 0 0 3px"></div>
</body></html>
